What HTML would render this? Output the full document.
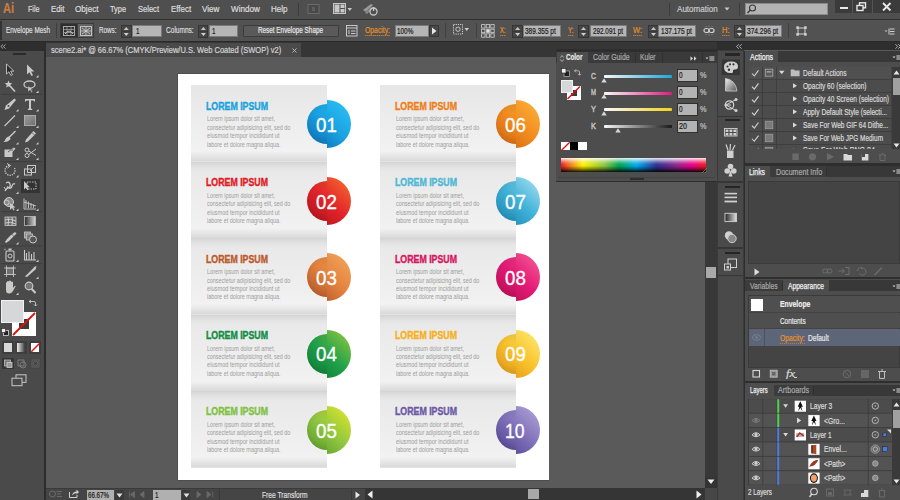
<!DOCTYPE html>
<html><head><meta charset="utf-8">
<style>
*{margin:0;padding:0;box-sizing:border-box}
html,body{width:900px;height:500px;overflow:hidden;background:#5a5a5a;font-family:"Liberation Sans",sans-serif;position:relative}
.a{position:absolute}
.t{position:absolute;white-space:nowrap;line-height:1;transform-origin:0 0;-webkit-text-stroke-width:0.22px}
.nb{-webkit-text-stroke-width:0}
svg{position:absolute;overflow:visible}

</style></head><body>
<div class="a" style="left:0px;top:0px;width:900px;height:19px;background:#4f4f4f;"></div>
<div class="a" style="left:0px;top:18.5px;width:900px;height:1.5px;background:#2f2f2f;"></div>
<div class="t " id="t0" style="left:2.60px;top:1.35px;font-size:14px;color:#c97d3e;font-weight:bold;transform:scaleX(0.7857);">Ai</div>
<div class="t " id="t1" style="left:27.50px;top:4.68px;font-size:9px;color:#dcdcdc;transform:scaleX(0.7922);">File</div>
<div class="t " id="t2" style="left:50.50px;top:4.68px;font-size:9px;color:#dcdcdc;transform:scaleX(0.8701);">Edit</div>
<div class="t " id="t3" style="left:75.00px;top:4.68px;font-size:9px;color:#dcdcdc;transform:scaleX(0.9033);">Object</div>
<div class="t " id="t4" style="left:110.00px;top:4.68px;font-size:9px;color:#dcdcdc;transform:scaleX(0.8199);">Type</div>
<div class="t " id="t5" style="left:138.00px;top:4.68px;font-size:9px;color:#dcdcdc;transform:scaleX(0.8395);">Select</div>
<div class="t " id="t6" style="left:170.60px;top:4.68px;font-size:9px;color:#dcdcdc;transform:scaleX(0.8837);">Effect</div>
<div class="t " id="t7" style="left:201.70px;top:4.68px;font-size:9px;color:#dcdcdc;transform:scaleX(0.9040);">View</div>
<div class="t " id="t8" style="left:231.10px;top:4.68px;font-size:9px;color:#dcdcdc;transform:scaleX(0.9027);">Window</div>
<div class="t " id="t9" style="left:271.40px;top:4.68px;font-size:9px;color:#dcdcdc;transform:scaleX(0.8857);">Help</div>
<div class="a" style="left:297.5px;top:3px;width:1px;height:13px;background:#3c3c3c;"></div>
<svg style="left:307px;top:3px" width="14" height="12" viewBox="0 0 14 12"><rect x="1" y="1.5" width="11" height="9" fill="#494949" stroke="#6a6a6a" stroke-width="1"/><rect x="5" y="4" width="3" height="4" fill="#5e5e5e"/></svg>
<svg style="left:333px;top:3px" width="20" height="12" viewBox="0 0 20 12"><rect x="0.5" y="0.5" width="12" height="10" fill="none" stroke="#c8c8c8" stroke-width="1"/><rect x="1.5" y="1.5" width="5" height="8" fill="#c8c8c8"/><rect x="7.5" y="1.5" width="4" height="3.5" fill="#c8c8c8"/><rect x="7.5" y="6" width="4" height="3.5" fill="#c8c8c8"/><path d="M14.5 5 L19 5 L16.75 8 Z" fill="#c8c8c8"/></svg>
<svg style="left:362px;top:3px" width="16" height="13" viewBox="0 0 16 13"><path d="M1 7 L9 1 L11 2 L4 9 Z" fill="#9a9a9a"/><path d="M3 10 L10 4 L11 5 L5 11Z" fill="#8a8a8a"/><circle cx="11.5" cy="8.5" r="3.5" fill="none" stroke="#c8c8c8" stroke-width="1.3"/><rect x="10.9" y="4" width="1.3" height="4" fill="#c8c8c8"/></svg>
<div class="a" style="left:669px;top:3px;width:1px;height:13px;background:#3c3c3c;"></div>
<div class="t " id="t10" style="left:677.30px;top:4.58px;font-size:9px;color:#c8c8c8;transform:scaleX(0.8961);">Automation</div>
<svg style="left:724px;top:7px" width="6" height="4" viewBox="0 0 6 4"><path d="M0.5 0.5 L5.5 0.5 L3 3.5 Z" fill="#c8c8c8"/></svg>
<div class="a" style="left:738.5px;top:3px;width:1px;height:13px;background:#3c3c3c;"></div>
<div class="a" style="left:744.8px;top:3.2px;width:83.7px;height:11.5px;background:#b3b3b3;border:1px solid #8a8a8a;"></div>
<svg style="left:746px;top:4px" width="11" height="10" viewBox="0 0 11 10"><circle cx="6.5" cy="4" r="3" fill="none" stroke="#3a3a3a" stroke-width="1.1"/><path d="M4.3 6 L1.5 9" stroke="#3a3a3a" stroke-width="1.4"/></svg>
<div class="a" style="left:834.5px;top:0px;width:65.5px;height:12.5px;background:#3b3b3b;"></div>
<div class="a" style="left:852px;top:0px;width:1px;height:12.5px;background:#555555;"></div>
<div class="a" style="left:872px;top:0px;width:1px;height:12.5px;background:#555555;"></div>
<div class="a" style="left:840px;top:7.2px;width:8px;height:2.2px;background:#e8e8e8;"></div>
<svg style="left:856px;top:2px" width="12" height="10" viewBox="0 0 12 10"><rect x="3.5" y="0.8" width="6" height="5" fill="none" stroke="#e8e8e8" stroke-width="1.4"/><rect x="1" y="3.5" width="6" height="5" fill="#3b3b3b" stroke="#e8e8e8" stroke-width="1.4"/></svg>
<svg style="left:882px;top:2px" width="10" height="10" viewBox="0 0 10 10"><path d="M1 1 L8.5 8.5 M8.5 1 L1 8.5" stroke="#e8e8e8" stroke-width="1.8"/></svg>
<div class="a" style="left:0px;top:20px;width:900px;height:21.3px;background:#525252;"></div>
<div class="a" style="left:0px;top:41.3px;width:900px;height:1px;background:#2a2a2a;"></div>
<div class="a" style="left:0px;top:21px;width:2px;height:19px;background:#333333;"></div>
<div class="t " id="t11" style="left:6.00px;top:26.12px;font-size:8.6px;color:#dedede;transform:scaleX(0.7426);">Envelope Mesh</div>
<div class="a" style="left:55.5px;top:23px;width:1px;height:15px;background:#3f3f3f;"></div>
<div class="a" style="left:60px;top:23.3px;width:34px;height:15px;background:#3a3a3a;"></div>
<div class="a" style="left:61px;top:24.3px;width:16px;height:13px;background:#2f2f2f;"></div>
<div class="a" style="left:78px;top:24.3px;width:15px;height:13px;background:#626262;"></div>
<svg style="left:63px;top:26px" width="12" height="10" viewBox="0 0 12 10"><rect x="0.5" y="0.5" width="11" height="9" fill="none" stroke="#a8a8a8" stroke-width="1"/><path d="M0.5 3.5 H11.5 M0.5 6.5 H11.5 M4 0.5 V9.5 M8 0.5 V9.5" stroke="#a0a0a0" stroke-width="0.8"/><path d="M2 8 Q6 2 10 8" stroke="#c8c8c8" fill="none" stroke-width="0.9"/></svg>
<svg style="left:80px;top:26px" width="12" height="10" viewBox="0 0 12 10"><rect x="0.5" y="0.5" width="11" height="9" fill="none" stroke="#c0c0c0" stroke-width="1"/><path d="M6 0.5 V9.5 M0.5 5 H11.5" stroke="#c0c0c0" stroke-width="0.9"/><path d="M2 2 L10 8 M10 2 L2 8" stroke="#d0d0d0" stroke-width="0.9"/></svg>
<div class="t " id="t12" style="left:99.00px;top:25.98px;font-size:9px;color:#dadada;transform:scaleX(0.6996);">Rows:</div>
<div class="a" style="left:121px;top:24.5px;width:10.5px;height:13px;background:#464646;border:1px solid #363636;"></div>
<div class="a" style="left:122px;top:30.5px;width:8.5px;height:1px;background:#3a3a3a;"></div>
<svg style="left:121px;top:24.5px" width="10.5" height="13" viewBox="0 0 10.5 13"><path d="M2.75 4.9 L7.75 4.9 L5.25 2.0999999999999996 Z" fill="#c4c4c4"/><path d="M2.75 8.1 L7.75 8.1 L5.25 10.9 Z" fill="#cfcfcf"/></svg>
<div class="a" style="left:131.5px;top:24.7px;width:30px;height:12.5px;background:#b5b5b5;border:1px solid #7a7a7a;"></div>
<div class="t " id="t13" style="left:135.50px;top:26.88px;font-size:9px;color:#1e1e1e;transform:scaleX(0.6978);">1</div>
<div class="t " id="t14" style="left:166.00px;top:25.98px;font-size:9px;color:#dadada;transform:scaleX(0.7286);">Columns:</div>
<div class="a" style="left:197.5px;top:24.5px;width:10.8px;height:13px;background:#464646;border:1px solid #363636;"></div>
<div class="a" style="left:198.5px;top:30.5px;width:8.8px;height:1px;background:#3a3a3a;"></div>
<svg style="left:197.5px;top:24.5px" width="10.8" height="13" viewBox="0 0 10.8 13"><path d="M2.9000000000000004 4.9 L7.9 4.9 L5.4 2.0999999999999996 Z" fill="#c4c4c4"/><path d="M2.9000000000000004 8.1 L7.9 8.1 L5.4 10.9 Z" fill="#cfcfcf"/></svg>
<div class="a" style="left:208.5px;top:24.7px;width:29px;height:12.5px;background:#b5b5b5;border:1px solid #7a7a7a;"></div>
<div class="t " id="t15" style="left:211.80px;top:26.88px;font-size:9px;color:#1e1e1e;transform:scaleX(0.6978);">1</div>
<div class="a" style="left:243.3px;top:24.7px;width:96px;height:12.5px;background:#5a5a5a;border:1px solid #3c3c3c;border-radius:1px;"></div>
<div class="t " id="t16" style="left:258.00px;top:26.08px;font-size:9px;color:#e6e6e6;transform:scaleX(0.7059);">Reset Envelope Shape</div>
<svg style="left:346px;top:25px" width="12" height="12" viewBox="0 0 12 12"><rect x="0.5" y="0.5" width="10.5" height="10.5" fill="none" stroke="#c8c8c8" stroke-width="1"/><path d="M0.5 3 H11 M3 5 V9 M5 6 H9.5 M5 8.5 H9.5" stroke="#c8c8c8" stroke-width="1"/></svg>
<div class="t " id="t17" style="left:365.00px;top:25.98px;font-size:9px;color:#e0902c;transform:scaleX(0.7572);">Opacity:</div>
<svg style="left:365px;top:35px" width="26" height="2"><path d="M0 0.5 H25" stroke="#c07a28" stroke-width="1" stroke-dasharray="1.5 0.5"/></svg>
<div class="a" style="left:395px;top:24.7px;width:34.2px;height:12.5px;background:#b5b5b5;border:1px solid #7a7a7a;"></div>
<div class="t " id="t18" style="left:397.00px;top:26.88px;font-size:9px;color:#1e1e1e;transform:scaleX(0.7077);">100%</div>
<div class="a" style="left:429.2px;top:24.7px;width:10px;height:12.5px;background:#474747;border:1px solid #363636;"></div>
<svg style="left:431px;top:27px" width="6" height="8"><path d="M1 0.5 L5.5 4 L1 7.5Z" fill="#e6e6e6"/></svg>
<div class="a" style="left:445px;top:23px;width:1px;height:15px;background:#3f3f3f;"></div>
<svg style="left:453px;top:24px" width="18" height="12" viewBox="0 0 18 12"><rect x="0.5" y="0.5" width="9" height="9.5" fill="none" stroke="#cfcfcf" stroke-width="1" stroke-dasharray="1.2 1"/><circle cx="5" cy="5.2" r="2.2" fill="none" stroke="#cfcfcf" stroke-width="0.9"/><path d="M11.5 4 L16 4 L13.75 7 Z" fill="#cfcfcf"/></svg>
<div class="a" style="left:475.8px;top:23px;width:1px;height:15px;background:#3f3f3f;"></div>
<svg style="left:480.5px;top:23.5px" width="14" height="14" viewBox="0 0 14 14"><rect x="0.6" y="0.6" width="3.4" height="3.4" fill="none" stroke="#cfcfcf" stroke-width="0.8"/><rect x="5.199999999999999" y="0.6" width="3.4" height="3.4" fill="none" stroke="#cfcfcf" stroke-width="0.8"/><rect x="9.799999999999999" y="0.6" width="3.4" height="3.4" fill="none" stroke="#cfcfcf" stroke-width="0.8"/><rect x="0.6" y="5.199999999999999" width="3.4" height="3.4" fill="none" stroke="#cfcfcf" stroke-width="0.8"/><rect x="5.199999999999999" y="5.199999999999999" width="3.6" height="3.6" fill="#dcdcdc"/><rect x="9.799999999999999" y="5.199999999999999" width="3.4" height="3.4" fill="none" stroke="#cfcfcf" stroke-width="0.8"/><rect x="0.6" y="9.799999999999999" width="3.4" height="3.4" fill="none" stroke="#cfcfcf" stroke-width="0.8"/><rect x="5.199999999999999" y="9.799999999999999" width="3.4" height="3.4" fill="none" stroke="#cfcfcf" stroke-width="0.8"/><rect x="9.799999999999999" y="9.799999999999999" width="3.4" height="3.4" fill="none" stroke="#cfcfcf" stroke-width="0.8"/></svg>
<div class="t " id="t19" style="left:500.30px;top:25.98px;font-size:9px;color:#e0902c;transform:scaleX(0.6459);">X:</div>
<svg style="left:500px;top:35px" width="7" height="2"><path d="M0 0.5 H6" stroke="#c07a28" stroke-width="1" stroke-dasharray="1.5 0.5"/></svg>
<div class="a" style="left:512px;top:24.5px;width:11.3px;height:13px;background:#464646;border:1px solid #363636;"></div>
<div class="a" style="left:513px;top:30.5px;width:9.3px;height:1px;background:#3a3a3a;"></div>
<svg style="left:512px;top:24.5px" width="11.3" height="13" viewBox="0 0 11.3 13"><path d="M3.1500000000000004 4.9 L8.15 4.9 L5.65 2.0999999999999996 Z" fill="#c4c4c4"/><path d="M3.1500000000000004 8.1 L8.15 8.1 L5.65 10.9 Z" fill="#cfcfcf"/></svg>
<div class="a" style="left:523.3px;top:24.7px;width:37.5px;height:12.5px;background:#b5b5b5;border:1px solid #7a7a7a;"></div>
<div class="t " id="t20" style="left:525.00px;top:26.88px;font-size:9px;color:#1e1e1e;transform:scaleX(0.7239);">389.355 pt</div>
<div class="t " id="t21" style="left:567.50px;top:25.98px;font-size:9px;color:#e0902c;transform:scaleX(0.6862);">Y:</div>
<svg style="left:567.5px;top:35px" width="7" height="2"><path d="M0 0.5 H6" stroke="#c07a28" stroke-width="1" stroke-dasharray="1.5 0.5"/></svg>
<div class="a" style="left:578.3px;top:24.5px;width:11px;height:13px;background:#464646;border:1px solid #363636;"></div>
<div class="a" style="left:579.3px;top:30.5px;width:9px;height:1px;background:#3a3a3a;"></div>
<svg style="left:578.3px;top:24.5px" width="11" height="13" viewBox="0 0 11 13"><path d="M3.0 4.9 L8.0 4.9 L5.5 2.0999999999999996 Z" fill="#c4c4c4"/><path d="M3.0 8.1 L8.0 8.1 L5.5 10.9 Z" fill="#cfcfcf"/></svg>
<div class="a" style="left:589.5px;top:24.7px;width:37.2px;height:12.5px;background:#b5b5b5;border:1px solid #7a7a7a;"></div>
<div class="t " id="t22" style="left:592.50px;top:26.88px;font-size:9px;color:#1e1e1e;transform:scaleX(0.7051);">292.091 pt</div>
<div class="t " id="t23" style="left:633.30px;top:25.98px;font-size:9px;color:#e0902c;transform:scaleX(0.8300);">W:</div>
<svg style="left:633px;top:35px" width="10" height="2"><path d="M0 0.5 H9" stroke="#c07a28" stroke-width="1" stroke-dasharray="1.5 0.5"/></svg>
<div class="a" style="left:647.5px;top:24.5px;width:11px;height:13px;background:#464646;border:1px solid #363636;"></div>
<div class="a" style="left:648.5px;top:30.5px;width:9px;height:1px;background:#3a3a3a;"></div>
<svg style="left:647.5px;top:24.5px" width="11" height="13" viewBox="0 0 11 13"><path d="M3.0 4.9 L8.0 4.9 L5.5 2.0999999999999996 Z" fill="#c4c4c4"/><path d="M3.0 8.1 L8.0 8.1 L5.5 10.9 Z" fill="#cfcfcf"/></svg>
<div class="a" style="left:658.3px;top:24.7px;width:37.5px;height:12.5px;background:#b5b5b5;border:1px solid #7a7a7a;"></div>
<div class="t " id="t24" style="left:660.80px;top:26.88px;font-size:9px;color:#1e1e1e;transform:scaleX(0.7263);">137.175 pt</div>
<svg style="left:703px;top:25px" width="12" height="12" viewBox="0 0 12 12"><rect x="1" y="3.5" width="5" height="4" rx="2" fill="none" stroke="#d0d0d0" stroke-width="1.2"/><rect x="6" y="3.5" width="5" height="4" rx="2" fill="none" stroke="#d0d0d0" stroke-width="1.2"/><path d="M3 1 V2 M6 0.5 V2 M9 1 V2 M3 9 V10 M6 9 V10.5 M9 9 V10" stroke="#9a9a9a" stroke-width="0.8"/></svg>
<div class="t " id="t25" style="left:721.70px;top:25.98px;font-size:9px;color:#e0902c;transform:scaleX(0.8333);">H:</div>
<svg style="left:721.5px;top:35px" width="9" height="2"><path d="M0 0.5 H8" stroke="#c07a28" stroke-width="1" stroke-dasharray="1.5 0.5"/></svg>
<div class="a" style="left:733.8px;top:24.5px;width:11px;height:13px;background:#464646;border:1px solid #363636;"></div>
<div class="a" style="left:734.8px;top:30.5px;width:9px;height:1px;background:#3a3a3a;"></div>
<svg style="left:733.8px;top:24.5px" width="11" height="13" viewBox="0 0 11 13"><path d="M3.0 4.9 L8.0 4.9 L5.5 2.0999999999999996 Z" fill="#c4c4c4"/><path d="M3.0 8.1 L8.0 8.1 L5.5 10.9 Z" fill="#cfcfcf"/></svg>
<div class="a" style="left:744.7px;top:24.7px;width:37.8px;height:12.5px;background:#b5b5b5;border:1px solid #7a7a7a;"></div>
<div class="t " id="t26" style="left:747.00px;top:26.88px;font-size:9px;color:#1e1e1e;transform:scaleX(0.7333);">374.296 pt</div>
<div class="a" style="left:787.7px;top:23px;width:1px;height:15px;background:#3f3f3f;"></div>
<svg style="left:795.5px;top:26px" width="11" height="10" viewBox="0 0 11 10"><rect x="2" y="2" width="7" height="6" fill="none" stroke="#d0d0d0" stroke-width="1"/><rect x="0.3" y="0.3" width="2.6" height="2.6" fill="#d0d0d0"/><rect x="8.1" y="0.3" width="2.6" height="2.6" fill="#d0d0d0"/><rect x="0.3" y="7.1" width="2.6" height="2.6" fill="#d0d0d0"/><rect x="8.1" y="7.1" width="2.6" height="2.6" fill="#d0d0d0"/></svg>
<svg style="left:884px;top:28px" width="11" height="7" viewBox="0 0 11 7"><path d="M0.5 2.5 L3.5 2.5 L2 4 Z" fill="#d0d0d0"/><path d="M5 0.5 V6.5 M6 1 H10.5 M6 3.5 H10.5 M6 6 H10.5" stroke="#d0d0d0" stroke-width="1"/></svg>
<div class="a" style="left:0px;top:42.3px;width:43.5px;height:457.7px;background:#4a4a4a;"></div>
<div class="a" style="left:0px;top:42.3px;width:43.5px;height:8.5px;background:#2e2e2e;"></div>
<svg style="left:0px;top:43px" width="6" height="7" viewBox="0 0 6 7"><path d="M3 1.5 L0.8 3.5 L3 5.5 M5.5 1.5 L3.3 3.5 L5.5 5.5" stroke="#b0b0b0" stroke-width="0.9" fill="none"/></svg>
<div class="a" style="left:43.5px;top:42.3px;width:2px;height:457.7px;background:#2c2c2c;"></div>
<div class="a" style="left:13px;top:53px;width:13px;height:2.4px;background:#2a2a2a;"></div>
<svg style="left:0px;top:0px" width="43" height="400" viewBox="0 0 43 400"><rect x="1" y="93.8" width="41" height="1" fill="#3e3e3e"/><rect x="1" y="161.2" width="41" height="1" fill="#3e3e3e"/><rect x="1" y="211.1" width="41" height="1" fill="#3e3e3e"/><rect x="1" y="245.5" width="41" height="1" fill="#3e3e3e"/><rect x="1" y="263.1" width="41" height="1" fill="#3e3e3e"/><path d="M6.5 64 L6.5 74 L8.9 71.8 L10.9 75.5 L12.5 74.7 L10.6 71.1 L13.8 71.1 Z" fill="#2a2a2a" stroke="#c9c9c9" stroke-width="0.9"/><path d="M27 64.5 L27 74.5 L29.4 72.3 L31.4 76 L33 75.2 L31.1 71.6 L34.3 71.6 Z" fill="#c9c9c9"/><path d="M38.5 77.5 L38.5 75.0 L36.0 77.5 Z" fill="#d0d0d0"/><path d="M8.5 80.5 L9.6 83 L12.3 83.2 L10.2 85 L10.9 87.6 L8.5 86.2 L6.1 87.6 L6.8 85 L4.7 83.2 L7.4 83 Z" fill="#c9c9c9"/><path d="M10 86 L15 91.5" stroke="#c9c9c9" stroke-width="1.6"/><ellipse cx="29.5" cy="84.5" rx="5.5" ry="3.5" fill="none" stroke="#c9c9c9" stroke-width="1.3"/><path d="M28 86 L28 92 L30 90 L31.5 92.5 L32.5 92 L31.2 89.5 L33.5 89.5 Z" fill="#c9c9c9" stroke="#4a4a4a" stroke-width="0.4"/><path d="M38.5 93 L38.5 90.5 L36.0 93 Z" fill="#d0d0d0"/><path d="M14.5 98.5 L6 105.5 L4.5 110 L9 108.5 L16 100 Z" fill="#c9c9c9"/><circle cx="8.5" cy="106" r="1" fill="#4a4a4a"/><path d="M18.5 111.5 L18.5 109.0 L16.0 111.5 Z" fill="#d0d0d0"/><path d="M25 99 H35 V101.5 H34 L33.5 100.5 H31 V108.5 L32.2 109 V110 H27.8 V109 L29 108.5 V100.5 H26.5 L26 101.5 H25 Z" fill="#c9c9c9"/><path d="M38.5 111.5 L38.5 109.0 L36.0 111.5 Z" fill="#d0d0d0"/><path d="M4.5 126 L15 115.5" stroke="#c9c9c9" stroke-width="1.1"/><path d="M18.5 128 L18.5 125.5 L16.0 128 Z" fill="#d0d0d0"/><defs><linearGradient id="rg" x1="0" y1="0" x2="1" y2="1"><stop offset="0" stop-color="#9a9a9a"/><stop offset="1" stop-color="#707070"/></linearGradient><linearGradient id="gg" x1="0" y1="0" x2="1" y2="0"><stop offset="0" stop-color="#2a2a2a"/><stop offset="1" stop-color="#d8d8d8"/></linearGradient></defs><rect x="24.5" y="115.5" width="11" height="10" fill="url(#rg)" stroke="#b8b8b8" stroke-width="0.8"/><path d="M38.5 128 L38.5 125.5 L36.0 128 Z" fill="#d0d0d0"/><path d="M15.5 131 L9 137.5" stroke="#c9c9c9" stroke-width="1.4"/><path d="M9.5 136.5 Q7 136 5.5 139 Q5 141 3.5 142 Q8 142.5 10.5 139 Z" fill="#c9c9c9"/><path d="M18.5 144.5 L18.5 142.0 L16.0 144.5 Z" fill="#d0d0d0"/><path d="M33.5 131 L36 133.5 L28 141.5 L25 142.5 L26 139.5 Z" fill="#c9c9c9"/><path d="M32 132.5 L34.5 135" stroke="#4a4a4a" stroke-width="0.7"/><path d="M38.5 144.5 L38.5 142.0 L36.0 144.5 Z" fill="#d0d0d0"/><path d="M4.5 149.5 H11 L14 147.5 L15.5 148.5 L12.5 152 V157 H4.5 Z" fill="#c9c9c9"/><path d="M8 152 Q11 149 13 150" stroke="#4a4a4a" stroke-width="0.8" fill="none"/><path d="M18.5 160 L18.5 157.5 L16.0 160 Z" fill="#d0d0d0"/><circle cx="27" cy="150" r="2" fill="none" stroke="#c9c9c9" stroke-width="1"/><circle cx="27" cy="155.5" r="2" fill="none" stroke="#c9c9c9" stroke-width="1"/><path d="M28.7 151 L36 155.5 M28.7 154.5 L36 149" stroke="#c9c9c9" stroke-width="1"/><path d="M38.5 160 L38.5 157.5 L36.0 160 Z" fill="#d0d0d0"/><path d="M14.5 168 A5 5 0 1 1 10 165.3" fill="none" stroke="#c9c9c9" stroke-width="1.3" stroke-dasharray="1.3 1"/><path d="M7 163.5 L10.5 165.5 L7.5 168" fill="none" stroke="#c9c9c9" stroke-width="1"/><path d="M18.5 177.5 L18.5 175.0 L16.0 177.5 Z" fill="#d0d0d0"/><rect x="24.5" y="169" width="7" height="6" fill="none" stroke="#c9c9c9" stroke-width="1"/><rect x="27.5" y="165.5" width="8" height="7" fill="none" stroke="#c9c9c9" stroke-width="1"/><path d="M30 171 L34 167" stroke="#c9c9c9" stroke-width="1"/><path d="M5 191 Q7 187 9 188 Q11 189 12 186 Q13 183 15 184 M6 183 Q9 181 10 184 Q11 187 8 188" fill="none" stroke="#c9c9c9" stroke-width="1.3"/><path d="M4 187 L6 190 L8 186" fill="none" stroke="#c9c9c9" stroke-width="1"/><path d="M18.5 194 L18.5 191.5 L16.0 194 Z" fill="#d0d0d0"/><rect x="21" y="179" width="18.7" height="14" fill="#333333"/><rect x="27" y="182" width="9" height="7" fill="none" stroke="#c9c9c9" stroke-width="0.9" stroke-dasharray="1.5 1"/><path d="M24 181 L24 189.5 L26 187.8 L27.3 190.3 L28.5 189.8 L27.3 187.3 L29.8 187.3 Z" fill="#c9c9c9"/><circle cx="9" cy="202" r="4.5" fill="#8a8a8a" stroke="#c9c9c9" stroke-width="1"/><circle cx="6.5" cy="202.5" r="2.5" fill="none" stroke="#d8d8d8" stroke-width="0.8"/><path d="M10 203 L10 210 L12 208 L13.5 210.5 L14.5 210 L13.3 207.5 L15.5 207.5 Z" fill="#c9c9c9"/><path d="M18.5 211 L18.5 208.5 L16.0 211 Z" fill="#d0d0d0"/><path d="M24 198.5 V209 H36 M26 200 V208 M28.5 201.5 V208 M31 203 V208 M33.5 204.5 V208 M24 202 L36 206" stroke="#c9c9c9" stroke-width="0.9" fill="none"/><path d="M38.5 211 L38.5 208.5 L36.0 211 Z" fill="#d0d0d0"/><rect x="5" y="217" width="11" height="8.5" fill="#6a6a6a" stroke="#c9c9c9" stroke-width="0.8"/><path d="M5 220 Q10 218 16 221 M5 223 Q10 221 16 224 M8 217 Q9 221 8 225.5 M12 217 Q13 221 12 225.5" stroke="#dedede" stroke-width="0.8" fill="none"/><rect x="24.5" y="216.5" width="11" height="9" fill="url(#gg)" stroke="#bdbdbd" stroke-width="0.8"/><path d="M15 232 L16.5 233.5 L13 237 L9 241 L6 243 L5 242 L7 239 L11 235 Z" fill="#c9c9c9"/><path d="M11.5 234 L14 236.5" stroke="#4a4a4a" stroke-width="0.7"/><path d="M18.5 244.5 L18.5 242.0 L16.0 244.5 Z" fill="#d0d0d0"/><rect x="24.5" y="232" width="6" height="6" fill="#8a8a8a" stroke="#c9c9c9" stroke-width="0.8"/><rect x="26.5" y="234" width="6" height="6" fill="#7a7a7a" stroke="#c9c9c9" stroke-width="0.8"/><circle cx="33" cy="239.5" r="3.5" fill="#555" stroke="#c9c9c9" stroke-width="1"/><rect x="6" y="251" width="8" height="10" rx="1" fill="none" stroke="#c9c9c9" stroke-width="1.1"/><circle cx="10" cy="256" r="2" fill="none" stroke="#c9c9c9" stroke-width="1"/><rect x="8.5" y="248.5" width="3" height="2" fill="#c9c9c9"/><circle cx="5" cy="249.5" r="1" fill="#888"/><path d="M18.5 262 L18.5 259.5 L16.0 262 Z" fill="#d0d0d0"/><path d="M24.5 250 V260 H36 M26.5 260 V253 M29 260 V251.5 M31.5 260 V254 M34 260 V252" stroke="#c9c9c9" stroke-width="1.1" fill="none"/><path d="M38.5 262 L38.5 259.5 L36.0 262 Z" fill="#d0d0d0"/><rect x="6.5" y="268" width="7" height="6.5" fill="#6f6f6f" stroke="#c9c9c9" stroke-width="0.8"/><path d="M6.5 265.5 V277 M13.5 265.5 V277 M4 268 H16 M4 274.5 H16" stroke="#c9c9c9" stroke-width="0.8"/><path d="M35.5 266 L25 276.5 L27 277 L36 269 Z" fill="#c9c9c9"/><path d="M34 267.5 L36.5 267" stroke="#c9c9c9" stroke-width="1"/><path d="M38.5 279 L38.5 276.5 L36.0 279 Z" fill="#d0d0d0"/><path d="M6 286 V283 Q6 282 7 282.5 V287 V281.5 Q8 280.5 9 281.5 V286 V281 Q10 280 11 281 V286 V282 Q12 281 13 282 V288 L14.5 286 Q15.5 285.5 15.5 286.5 L13 291 Q11.5 293.5 9 293.5 Q6 293.5 6 290 Z" fill="#c9c9c9"/><path d="M18.5 295 L18.5 292.5 L16.0 295 Z" fill="#d0d0d0"/><circle cx="29" cy="286" r="3.8" fill="#777" stroke="#c9c9c9" stroke-width="1.2"/><path d="M31.5 288.8 L35.5 293" stroke="#c9c9c9" stroke-width="2"/></svg>
<div class="a" style="left:12px;top:312px;width:24px;height:24px;background:#ffffff;"></div>
<div class="a" style="left:19px;top:319px;width:10px;height:10px;background:#3b3b3b;"></div>
<svg style="left:12px;top:312px" width="24" height="24"><path d="M1 23 L23 1" stroke="#e01010" stroke-width="1.8"/></svg>
<div class="a" style="left:1px;top:300px;width:22.5px;height:23.2px;background:#d6d7d9;border:1px solid #f2f2f2;"></div>
<svg style="left:28px;top:300px" width="9" height="7" viewBox="0 0 9 7"><path d="M1 1.5 L3 0 M1 1.5 L3 3 M1 1.5 H6 Q7.5 1.5 7.5 3 V6 M6 4.5 L7.5 6 L9 4.5" stroke="#c8c8c8" stroke-width="0.9" fill="none"/></svg>
<svg style="left:1px;top:328px" width="8" height="8" viewBox="0 0 8 8"><rect x="2.5" y="2.5" width="5" height="5" fill="#222" stroke="#ddd" stroke-width="0.8"/><rect x="0.5" y="0.5" width="4" height="4" fill="#eee" stroke="#222" stroke-width="0.6"/></svg>
<div class="a" style="left:2px;top:341px;width:12px;height:13px;background:#3e3e3e;"></div>
<div class="a" style="left:3.5px;top:343px;width:8.5px;height:9px;background:#d8d8d8;"></div>
<div class="a" style="left:15px;top:341px;width:12px;height:13px;background:#3e3e3e;"></div>
<div class="a" style="left:16.5px;top:343px;width:8.5px;height:9px;background:linear-gradient(to right,#f0f0f0,#3a3a3a);"></div>
<div class="a" style="left:29px;top:341px;width:12px;height:13px;background:#3e3e3e;"></div>
<div class="a" style="left:30.5px;top:343px;width:8.5px;height:9px;background:#ffffff;"></div>
<svg style="left:30.5px;top:343px" width="9" height="9"><path d="M0.3 8.7 L8.7 0.3" stroke="#e01010" stroke-width="1.5"/></svg>
<div class="a" style="left:2px;top:358px;width:12px;height:11px;background:#353535;"></div>
<div class="a" style="left:15px;top:358px;width:12px;height:11px;background:#474747;"></div>
<div class="a" style="left:28px;top:358px;width:13px;height:11px;background:#474747;"></div>
<svg style="left:3px;top:359px" width="38" height="10" viewBox="0 0 38 10"><rect x="1.5" y="1" width="6" height="6" fill="#777" stroke="#bdbdbd" stroke-width="0.8"/><rect x="4" y="3.5" width="5" height="5" fill="#999" stroke="#d0d0d0" stroke-width="0.8"/><rect x="15" y="1" width="6" height="6" fill="none" stroke="#8a8a8a" stroke-width="0.8"/><circle cx="20" cy="6" r="3" fill="none" stroke="#8a8a8a" stroke-width="0.8"/><rect x="29" y="1" width="7" height="7" fill="none" stroke="#666" stroke-width="0.8"/><circle cx="32.5" cy="4.5" r="2.3" fill="none" stroke="#666" stroke-width="0.8"/></svg>
<svg style="left:11px;top:374px" width="16" height="13" viewBox="0 0 16 13"><rect x="5" y="0.8" width="10" height="7.5" fill="#4a4a4a" stroke="#c8c8c8" stroke-width="1"/><rect x="1" y="4.2" width="10" height="7.5" fill="#4a4a4a" stroke="#c8c8c8" stroke-width="1"/></svg>
<div class="a" style="left:45.5px;top:42.3px;width:672px;height:14.8px;background:#363636;"></div>
<div class="a" style="left:45.5px;top:42.5px;width:255.6px;height:14.5px;background:#4a4a4a;"></div>
<div class="t " id="t27" style="left:51.00px;top:45.92px;font-size:8.6px;color:#d2d2d2;transform:scaleX(0.8733);">scene2.ai* @ 66.67% (CMYK/Preview/U.S. Web Coated (SWOP) v2)</div>
<svg style="left:292px;top:48px" width="5" height="5" viewBox="0 0 5 5"><path d="M0.5 0.5 L4.5 4.5 M4.5 0.5 L0.5 4.5" stroke="#c0c0c0" stroke-width="0.9"/></svg>
<div class="a" style="left:45.5px;top:57px;width:659.5px;height:431px;background:#5a5a5a;"></div>
<div class="a" style="left:177px;top:73px;width:372.1px;height:407.5px;background:#4e4e4e;"></div>
<div class="a" style="left:177.5px;top:73.5px;width:371.1px;height:406.5px;background:#ffffff;"></div>
<div class="a" style="left:191.0px;top:85.2px;width:136.3px;height:76.74px;background:linear-gradient(to bottom,#e5e6e7 0px,#e8e8e9 10px,#ececec 30px,#f0f0f0 58px,#f2f2f2 66px,#e6e6e6 71px,#dadada 75.6px,#e3e3e3 76.44px);"></div>
<div class="t " id="t28" style="left:206.30px;top:100.63px;font-size:10.6px;color:#1aa3e0;font-weight:bold;transform:scaleX(0.8294);-webkit-text-stroke:0.4px #1aa3e0;">LOREM IPSUM</div>
<div class="t nb" id="t29" style="left:207.00px;top:115.31px;font-size:7.2px;color:#9c9c9c;transform:scaleX(0.7667);">Lorem ipsum dolor sit amet,</div>
<div class="t nb" id="t30" style="left:207.00px;top:123.71px;font-size:7.2px;color:#9c9c9c;transform:scaleX(0.7618);">consectetur adipisicing elit, sed do</div>
<div class="t nb" id="t31" style="left:207.00px;top:132.11px;font-size:7.2px;color:#9c9c9c;transform:scaleX(0.7901);">eiusmod tempor incididunt ut</div>
<div class="t nb" id="t32" style="left:207.00px;top:140.51px;font-size:7.2px;color:#9c9c9c;transform:scaleX(0.7579);">labore et dolore magna aliqua.</div>
<svg style="left:297.30px;top:94.40px" width="60" height="60" viewBox="0 0 60 60"><defs><linearGradient id="g0" gradientUnits="userSpaceOnUse" x1="50" y1="8" x2="12" y2="50"><stop offset="0" stop-color="#2cc0f4"/><stop offset="0.5" stop-color="#1aa2e2"/><stop offset="1" stop-color="#0c6fb4"/></linearGradient><radialGradient id="sh0" gradientUnits="userSpaceOnUse" cx="24" cy="30" r="20"><stop offset="0.55" stop-color="#000" stop-opacity="0"/><stop offset="1" stop-color="#000" stop-opacity="0.08"/></radialGradient></defs><path d="M30 6 A24 24 0 0 1 30 54 Z" fill="url(#g0)"/><path d="M30 10 A20 20 0 0 0 30 50 Z" fill="url(#g0)"/><path d="M30 10 A20 20 0 0 0 30 50 Z" fill="url(#sh0)"/></svg>
<div class="t " id="t33" style="left:316.40px;top:114.12px;font-size:21px;color:#ffffff;transform:scaleX(0.8904);-webkit-text-stroke:0.35px #fff;">01</div>
<div class="a" style="left:191.0px;top:161.64px;width:136.3px;height:76.74px;background:linear-gradient(to bottom,#d3d3d3 0px,#d9d9d9 1.5px,#e4e4e4 6px,#e9e9e9 10px,#ececec 30px,#f0f0f0 58px,#f2f2f2 66px,#e6e6e6 71px,#dadada 75.6px,#e3e3e3 76.44px);"></div>
<div class="t " id="t34" style="left:206.30px;top:177.07px;font-size:10.6px;color:#e01b26;font-weight:bold;transform:scaleX(0.8294);-webkit-text-stroke:0.4px #e01b26;">LOREM IPSUM</div>
<div class="t nb" id="t35" style="left:207.00px;top:191.75px;font-size:7.2px;color:#9c9c9c;transform:scaleX(0.7667);">Lorem ipsum dolor sit amet,</div>
<div class="t nb" id="t36" style="left:207.00px;top:200.15px;font-size:7.2px;color:#9c9c9c;transform:scaleX(0.7618);">consectetur adipisicing elit, sed do</div>
<div class="t nb" id="t37" style="left:207.00px;top:208.55px;font-size:7.2px;color:#9c9c9c;transform:scaleX(0.7901);">eiusmod tempor incididunt ut</div>
<div class="t nb" id="t38" style="left:207.00px;top:216.95px;font-size:7.2px;color:#9c9c9c;transform:scaleX(0.7579);">labore et dolore magna aliqua.</div>
<svg style="left:297.30px;top:170.84px" width="60" height="60" viewBox="0 0 60 60"><defs><linearGradient id="g1" gradientUnits="userSpaceOnUse" x1="50" y1="8" x2="12" y2="50"><stop offset="0" stop-color="#f46a2e"/><stop offset="0.5" stop-color="#e3252a"/><stop offset="1" stop-color="#b0121c"/></linearGradient><radialGradient id="sh1" gradientUnits="userSpaceOnUse" cx="24" cy="30" r="20"><stop offset="0.55" stop-color="#000" stop-opacity="0"/><stop offset="1" stop-color="#000" stop-opacity="0.08"/></radialGradient></defs><path d="M30 6 A24 24 0 0 1 30 54 Z" fill="url(#g1)"/><path d="M30 10 A20 20 0 0 0 30 50 Z" fill="url(#g1)"/><path d="M30 10 A20 20 0 0 0 30 50 Z" fill="url(#sh1)"/></svg>
<div class="t " id="t39" style="left:316.40px;top:190.56px;font-size:21px;color:#ffffff;transform:scaleX(0.8904);-webkit-text-stroke:0.35px #fff;">02</div>
<div class="a" style="left:191.0px;top:238.07999999999998px;width:136.3px;height:76.74px;background:linear-gradient(to bottom,#d3d3d3 0px,#d9d9d9 1.5px,#e4e4e4 6px,#e9e9e9 10px,#ececec 30px,#f0f0f0 58px,#f2f2f2 66px,#e6e6e6 71px,#dadada 75.6px,#e3e3e3 76.44px);"></div>
<div class="t " id="t40" style="left:206.30px;top:253.51px;font-size:10.6px;color:#bd5a2c;font-weight:bold;transform:scaleX(0.8294);-webkit-text-stroke:0.4px #bd5a2c;">LOREM IPSUM</div>
<div class="t nb" id="t41" style="left:207.00px;top:268.19px;font-size:7.2px;color:#9c9c9c;transform:scaleX(0.7667);">Lorem ipsum dolor sit amet,</div>
<div class="t nb" id="t42" style="left:207.00px;top:276.59px;font-size:7.2px;color:#9c9c9c;transform:scaleX(0.7618);">consectetur adipisicing elit, sed do</div>
<div class="t nb" id="t43" style="left:207.00px;top:284.99px;font-size:7.2px;color:#9c9c9c;transform:scaleX(0.7901);">eiusmod tempor incididunt ut</div>
<div class="t nb" id="t44" style="left:207.00px;top:293.39px;font-size:7.2px;color:#9c9c9c;transform:scaleX(0.7579);">labore et dolore magna aliqua.</div>
<svg style="left:297.30px;top:247.28px" width="60" height="60" viewBox="0 0 60 60"><defs><linearGradient id="g2" gradientUnits="userSpaceOnUse" x1="50" y1="8" x2="12" y2="50"><stop offset="0" stop-color="#f2a45c"/><stop offset="0.5" stop-color="#e4823e"/><stop offset="1" stop-color="#b05428"/></linearGradient><radialGradient id="sh2" gradientUnits="userSpaceOnUse" cx="24" cy="30" r="20"><stop offset="0.55" stop-color="#000" stop-opacity="0"/><stop offset="1" stop-color="#000" stop-opacity="0.08"/></radialGradient></defs><path d="M30 6 A24 24 0 0 1 30 54 Z" fill="url(#g2)"/><path d="M30 10 A20 20 0 0 0 30 50 Z" fill="url(#g2)"/><path d="M30 10 A20 20 0 0 0 30 50 Z" fill="url(#sh2)"/></svg>
<div class="t " id="t45" style="left:316.40px;top:267.00px;font-size:21px;color:#ffffff;transform:scaleX(0.8904);-webkit-text-stroke:0.35px #fff;">03</div>
<div class="a" style="left:191.0px;top:314.52px;width:136.3px;height:76.74px;background:linear-gradient(to bottom,#d3d3d3 0px,#d9d9d9 1.5px,#e4e4e4 6px,#e9e9e9 10px,#ececec 30px,#f0f0f0 58px,#f2f2f2 66px,#e6e6e6 71px,#dadada 75.6px,#e3e3e3 76.44px);"></div>
<div class="t " id="t46" style="left:206.30px;top:329.95px;font-size:10.6px;color:#128c45;font-weight:bold;transform:scaleX(0.8294);-webkit-text-stroke:0.4px #128c45;">LOREM IPSUM</div>
<div class="t nb" id="t47" style="left:207.00px;top:344.63px;font-size:7.2px;color:#9c9c9c;transform:scaleX(0.7667);">Lorem ipsum dolor sit amet,</div>
<div class="t nb" id="t48" style="left:207.00px;top:353.03px;font-size:7.2px;color:#9c9c9c;transform:scaleX(0.7618);">consectetur adipisicing elit, sed do</div>
<div class="t nb" id="t49" style="left:207.00px;top:361.43px;font-size:7.2px;color:#9c9c9c;transform:scaleX(0.7901);">eiusmod tempor incididunt ut</div>
<div class="t nb" id="t50" style="left:207.00px;top:369.83px;font-size:7.2px;color:#9c9c9c;transform:scaleX(0.7579);">labore et dolore magna aliqua.</div>
<svg style="left:297.30px;top:323.72px" width="60" height="60" viewBox="0 0 60 60"><defs><linearGradient id="g3" gradientUnits="userSpaceOnUse" x1="50" y1="8" x2="12" y2="50"><stop offset="0" stop-color="#8cc63f"/><stop offset="0.5" stop-color="#22a24a"/><stop offset="1" stop-color="#0d7a36"/></linearGradient><radialGradient id="sh3" gradientUnits="userSpaceOnUse" cx="24" cy="30" r="20"><stop offset="0.55" stop-color="#000" stop-opacity="0"/><stop offset="1" stop-color="#000" stop-opacity="0.08"/></radialGradient></defs><path d="M30 6 A24 24 0 0 1 30 54 Z" fill="url(#g3)"/><path d="M30 10 A20 20 0 0 0 30 50 Z" fill="url(#g3)"/><path d="M30 10 A20 20 0 0 0 30 50 Z" fill="url(#sh3)"/></svg>
<div class="t " id="t51" style="left:316.40px;top:343.44px;font-size:21px;color:#ffffff;transform:scaleX(0.8904);-webkit-text-stroke:0.35px #fff;">04</div>
<div class="a" style="left:191.0px;top:390.96px;width:136.3px;height:76.74px;background:linear-gradient(to bottom,#d3d3d3 0px,#d9d9d9 1.5px,#e4e4e4 6px,#e9e9e9 10px,#ececec 30px,#f0f0f0 58px,#f2f2f2 66px,#e6e6e6 71px,#dadada 75.6px,#e3e3e3 76.44px);"></div>
<div class="t " id="t52" style="left:206.30px;top:406.39px;font-size:10.6px;color:#7fc142;font-weight:bold;transform:scaleX(0.8294);-webkit-text-stroke:0.4px #7fc142;">LOREM IPSUM</div>
<div class="t nb" id="t53" style="left:207.00px;top:421.07px;font-size:7.2px;color:#9c9c9c;transform:scaleX(0.7667);">Lorem ipsum dolor sit amet,</div>
<div class="t nb" id="t54" style="left:207.00px;top:429.47px;font-size:7.2px;color:#9c9c9c;transform:scaleX(0.7618);">consectetur adipisicing elit, sed do</div>
<div class="t nb" id="t55" style="left:207.00px;top:437.87px;font-size:7.2px;color:#9c9c9c;transform:scaleX(0.7901);">eiusmod tempor incididunt ut</div>
<div class="t nb" id="t56" style="left:207.00px;top:446.27px;font-size:7.2px;color:#9c9c9c;transform:scaleX(0.7579);">labore et dolore magna aliqua.</div>
<svg style="left:297.30px;top:400.16px" width="60" height="60" viewBox="0 0 60 60"><defs><linearGradient id="g4" gradientUnits="userSpaceOnUse" x1="50" y1="8" x2="12" y2="50"><stop offset="0" stop-color="#dde42c"/><stop offset="0.5" stop-color="#92c840"/><stop offset="1" stop-color="#5a9a2c"/></linearGradient><radialGradient id="sh4" gradientUnits="userSpaceOnUse" cx="24" cy="30" r="20"><stop offset="0.55" stop-color="#000" stop-opacity="0"/><stop offset="1" stop-color="#000" stop-opacity="0.08"/></radialGradient></defs><path d="M30 6 A24 24 0 0 1 30 54 Z" fill="url(#g4)"/><path d="M30 10 A20 20 0 0 0 30 50 Z" fill="url(#g4)"/><path d="M30 10 A20 20 0 0 0 30 50 Z" fill="url(#sh4)"/></svg>
<div class="t " id="t57" style="left:316.40px;top:419.88px;font-size:21px;color:#ffffff;transform:scaleX(0.8904);-webkit-text-stroke:0.35px #fff;">05</div>
<div class="a" style="left:379.6px;top:85.2px;width:136.3px;height:76.74px;background:linear-gradient(to bottom,#e5e6e7 0px,#e8e8e9 10px,#ececec 30px,#f0f0f0 58px,#f2f2f2 66px,#e6e6e6 71px,#dadada 75.6px,#e3e3e3 76.44px);"></div>
<div class="t " id="t58" style="left:394.90px;top:100.63px;font-size:10.6px;color:#ee7f1a;font-weight:bold;transform:scaleX(0.8294);-webkit-text-stroke:0.4px #ee7f1a;">LOREM IPSUM</div>
<div class="t nb" id="t59" style="left:395.60px;top:115.31px;font-size:7.2px;color:#9c9c9c;transform:scaleX(0.7667);">Lorem ipsum dolor sit amet,</div>
<div class="t nb" id="t60" style="left:395.60px;top:123.71px;font-size:7.2px;color:#9c9c9c;transform:scaleX(0.7618);">consectetur adipisicing elit, sed do</div>
<div class="t nb" id="t61" style="left:395.60px;top:132.11px;font-size:7.2px;color:#9c9c9c;transform:scaleX(0.7901);">eiusmod tempor incididunt ut</div>
<div class="t nb" id="t62" style="left:395.60px;top:140.51px;font-size:7.2px;color:#9c9c9c;transform:scaleX(0.7579);">labore et dolore magna aliqua.</div>
<svg style="left:485.90px;top:94.40px" width="60" height="60" viewBox="0 0 60 60"><defs><linearGradient id="g5" gradientUnits="userSpaceOnUse" x1="50" y1="8" x2="12" y2="50"><stop offset="0" stop-color="#fbb038"/><stop offset="0.5" stop-color="#f28c20"/><stop offset="1" stop-color="#cf6610"/></linearGradient><radialGradient id="sh5" gradientUnits="userSpaceOnUse" cx="24" cy="30" r="20"><stop offset="0.55" stop-color="#000" stop-opacity="0"/><stop offset="1" stop-color="#000" stop-opacity="0.08"/></radialGradient></defs><path d="M30 6 A24 24 0 0 1 30 54 Z" fill="url(#g5)"/><path d="M30 10 A20 20 0 0 0 30 50 Z" fill="url(#g5)"/><path d="M30 10 A20 20 0 0 0 30 50 Z" fill="url(#sh5)"/></svg>
<div class="t " id="t63" style="left:505.00px;top:114.12px;font-size:21px;color:#ffffff;transform:scaleX(0.8904);-webkit-text-stroke:0.35px #fff;">06</div>
<div class="a" style="left:379.6px;top:161.64px;width:136.3px;height:76.74px;background:linear-gradient(to bottom,#d3d3d3 0px,#d9d9d9 1.5px,#e4e4e4 6px,#e9e9e9 10px,#ececec 30px,#f0f0f0 58px,#f2f2f2 66px,#e6e6e6 71px,#dadada 75.6px,#e3e3e3 76.44px);"></div>
<div class="t " id="t64" style="left:394.90px;top:177.07px;font-size:10.6px;color:#4fb8d6;font-weight:bold;transform:scaleX(0.8294);-webkit-text-stroke:0.4px #4fb8d6;">LOREM IPSUM</div>
<div class="t nb" id="t65" style="left:395.60px;top:191.75px;font-size:7.2px;color:#9c9c9c;transform:scaleX(0.7667);">Lorem ipsum dolor sit amet,</div>
<div class="t nb" id="t66" style="left:395.60px;top:200.15px;font-size:7.2px;color:#9c9c9c;transform:scaleX(0.7618);">consectetur adipisicing elit, sed do</div>
<div class="t nb" id="t67" style="left:395.60px;top:208.55px;font-size:7.2px;color:#9c9c9c;transform:scaleX(0.7901);">eiusmod tempor incididunt ut</div>
<div class="t nb" id="t68" style="left:395.60px;top:216.95px;font-size:7.2px;color:#9c9c9c;transform:scaleX(0.7579);">labore et dolore magna aliqua.</div>
<svg style="left:485.90px;top:170.84px" width="60" height="60" viewBox="0 0 60 60"><defs><linearGradient id="g6" gradientUnits="userSpaceOnUse" x1="50" y1="8" x2="12" y2="50"><stop offset="0" stop-color="#a0dcf0"/><stop offset="0.5" stop-color="#40b2d8"/><stop offset="1" stop-color="#1c86b2"/></linearGradient><radialGradient id="sh6" gradientUnits="userSpaceOnUse" cx="24" cy="30" r="20"><stop offset="0.55" stop-color="#000" stop-opacity="0"/><stop offset="1" stop-color="#000" stop-opacity="0.08"/></radialGradient></defs><path d="M30 6 A24 24 0 0 1 30 54 Z" fill="url(#g6)"/><path d="M30 10 A20 20 0 0 0 30 50 Z" fill="url(#g6)"/><path d="M30 10 A20 20 0 0 0 30 50 Z" fill="url(#sh6)"/></svg>
<div class="t " id="t69" style="left:505.00px;top:190.56px;font-size:21px;color:#ffffff;transform:scaleX(0.8904);-webkit-text-stroke:0.35px #fff;">07</div>
<div class="a" style="left:379.6px;top:238.07999999999998px;width:136.3px;height:76.74px;background:linear-gradient(to bottom,#d3d3d3 0px,#d9d9d9 1.5px,#e4e4e4 6px,#e9e9e9 10px,#ececec 30px,#f0f0f0 58px,#f2f2f2 66px,#e6e6e6 71px,#dadada 75.6px,#e3e3e3 76.44px);"></div>
<div class="t " id="t70" style="left:394.90px;top:253.51px;font-size:10.6px;color:#d6175f;font-weight:bold;transform:scaleX(0.8294);-webkit-text-stroke:0.4px #d6175f;">LOREM IPSUM</div>
<div class="t nb" id="t71" style="left:395.60px;top:268.19px;font-size:7.2px;color:#9c9c9c;transform:scaleX(0.7667);">Lorem ipsum dolor sit amet,</div>
<div class="t nb" id="t72" style="left:395.60px;top:276.59px;font-size:7.2px;color:#9c9c9c;transform:scaleX(0.7618);">consectetur adipisicing elit, sed do</div>
<div class="t nb" id="t73" style="left:395.60px;top:284.99px;font-size:7.2px;color:#9c9c9c;transform:scaleX(0.7901);">eiusmod tempor incididunt ut</div>
<div class="t nb" id="t74" style="left:395.60px;top:293.39px;font-size:7.2px;color:#9c9c9c;transform:scaleX(0.7579);">labore et dolore magna aliqua.</div>
<svg style="left:485.90px;top:247.28px" width="60" height="60" viewBox="0 0 60 60"><defs><linearGradient id="g7" gradientUnits="userSpaceOnUse" x1="50" y1="8" x2="12" y2="50"><stop offset="0" stop-color="#f45a96"/><stop offset="0.5" stop-color="#e31a76"/><stop offset="1" stop-color="#b80c50"/></linearGradient><radialGradient id="sh7" gradientUnits="userSpaceOnUse" cx="24" cy="30" r="20"><stop offset="0.55" stop-color="#000" stop-opacity="0"/><stop offset="1" stop-color="#000" stop-opacity="0.08"/></radialGradient></defs><path d="M30 6 A24 24 0 0 1 30 54 Z" fill="url(#g7)"/><path d="M30 10 A20 20 0 0 0 30 50 Z" fill="url(#g7)"/><path d="M30 10 A20 20 0 0 0 30 50 Z" fill="url(#sh7)"/></svg>
<div class="t " id="t75" style="left:505.00px;top:267.00px;font-size:21px;color:#ffffff;transform:scaleX(0.8904);-webkit-text-stroke:0.35px #fff;">08</div>
<div class="a" style="left:379.6px;top:314.52px;width:136.3px;height:76.74px;background:linear-gradient(to bottom,#d3d3d3 0px,#d9d9d9 1.5px,#e4e4e4 6px,#e9e9e9 10px,#ececec 30px,#f0f0f0 58px,#f2f2f2 66px,#e6e6e6 71px,#dadada 75.6px,#e3e3e3 76.44px);"></div>
<div class="t " id="t76" style="left:394.90px;top:329.95px;font-size:10.6px;color:#f5b11e;font-weight:bold;transform:scaleX(0.8294);-webkit-text-stroke:0.4px #f5b11e;">LOREM IPSUM</div>
<div class="t nb" id="t77" style="left:395.60px;top:344.63px;font-size:7.2px;color:#9c9c9c;transform:scaleX(0.7667);">Lorem ipsum dolor sit amet,</div>
<div class="t nb" id="t78" style="left:395.60px;top:353.03px;font-size:7.2px;color:#9c9c9c;transform:scaleX(0.7618);">consectetur adipisicing elit, sed do</div>
<div class="t nb" id="t79" style="left:395.60px;top:361.43px;font-size:7.2px;color:#9c9c9c;transform:scaleX(0.7901);">eiusmod tempor incididunt ut</div>
<div class="t nb" id="t80" style="left:395.60px;top:369.83px;font-size:7.2px;color:#9c9c9c;transform:scaleX(0.7579);">labore et dolore magna aliqua.</div>
<svg style="left:485.90px;top:323.72px" width="60" height="60" viewBox="0 0 60 60"><defs><linearGradient id="g8" gradientUnits="userSpaceOnUse" x1="50" y1="8" x2="12" y2="50"><stop offset="0" stop-color="#fee870"/><stop offset="0.5" stop-color="#f8c22c"/><stop offset="1" stop-color="#e09616"/></linearGradient><radialGradient id="sh8" gradientUnits="userSpaceOnUse" cx="24" cy="30" r="20"><stop offset="0.55" stop-color="#000" stop-opacity="0"/><stop offset="1" stop-color="#000" stop-opacity="0.08"/></radialGradient></defs><path d="M30 6 A24 24 0 0 1 30 54 Z" fill="url(#g8)"/><path d="M30 10 A20 20 0 0 0 30 50 Z" fill="url(#g8)"/><path d="M30 10 A20 20 0 0 0 30 50 Z" fill="url(#sh8)"/></svg>
<div class="t " id="t81" style="left:505.00px;top:343.44px;font-size:21px;color:#ffffff;transform:scaleX(0.8904);-webkit-text-stroke:0.35px #fff;">09</div>
<div class="a" style="left:379.6px;top:390.96px;width:136.3px;height:76.74px;background:linear-gradient(to bottom,#d3d3d3 0px,#d9d9d9 1.5px,#e4e4e4 6px,#e9e9e9 10px,#ececec 30px,#f0f0f0 58px,#f2f2f2 66px,#e6e6e6 71px,#dadada 75.6px,#e3e3e3 76.44px);"></div>
<div class="t " id="t82" style="left:394.90px;top:406.39px;font-size:10.6px;color:#6b58a6;font-weight:bold;transform:scaleX(0.8294);-webkit-text-stroke:0.4px #6b58a6;">LOREM IPSUM</div>
<div class="t nb" id="t83" style="left:395.60px;top:421.07px;font-size:7.2px;color:#9c9c9c;transform:scaleX(0.7667);">Lorem ipsum dolor sit amet,</div>
<div class="t nb" id="t84" style="left:395.60px;top:429.47px;font-size:7.2px;color:#9c9c9c;transform:scaleX(0.7618);">consectetur adipisicing elit, sed do</div>
<div class="t nb" id="t85" style="left:395.60px;top:437.87px;font-size:7.2px;color:#9c9c9c;transform:scaleX(0.7901);">eiusmod tempor incididunt ut</div>
<div class="t nb" id="t86" style="left:395.60px;top:446.27px;font-size:7.2px;color:#9c9c9c;transform:scaleX(0.7579);">labore et dolore magna aliqua.</div>
<svg style="left:485.90px;top:400.16px" width="60" height="60" viewBox="0 0 60 60"><defs><linearGradient id="g9" gradientUnits="userSpaceOnUse" x1="50" y1="8" x2="12" y2="50"><stop offset="0" stop-color="#b0a2d6"/><stop offset="0.5" stop-color="#8070ba"/><stop offset="1" stop-color="#50438e"/></linearGradient><radialGradient id="sh9" gradientUnits="userSpaceOnUse" cx="24" cy="30" r="20"><stop offset="0.55" stop-color="#000" stop-opacity="0"/><stop offset="1" stop-color="#000" stop-opacity="0.08"/></radialGradient></defs><path d="M30 6 A24 24 0 0 1 30 54 Z" fill="url(#g9)"/><path d="M30 10 A20 20 0 0 0 30 50 Z" fill="url(#g9)"/><path d="M30 10 A20 20 0 0 0 30 50 Z" fill="url(#sh9)"/></svg>
<div class="t " id="t87" style="left:505.00px;top:419.88px;font-size:21px;color:#ffffff;transform:scaleX(0.8391);-webkit-text-stroke:0.35px #fff;">10</div>
<div class="a" style="left:45.5px;top:487.8px;width:659.5px;height:12.2px;background:#454545;"></div>
<div class="a" style="left:45.5px;top:487.8px;width:659.5px;height:1px;background:#3a3a3a;"></div>
<svg style="left:49px;top:490px" width="14" height="8" viewBox="0 0 14 8"><circle cx="3.5" cy="4" r="3" fill="none" stroke="#6e6e6e" stroke-width="1"/><path d="M7.5 1.5 H13 M8 4 H12 M8 6.5 H13" stroke="#6e6e6e" stroke-width="0.9"/></svg>
<svg style="left:69px;top:489px" width="10" height="9" viewBox="0 0 10 9"><path d="M0.5 3 V8.5 H8 V6" stroke="#d0d0d0" stroke-width="1" fill="none"/><path d="M3 6.5 Q4 2.5 7.5 2.5 V0.5 L10 3 L7.5 5.5 V4 Q5 4 3 6.5Z" fill="#d0d0d0"/></svg>
<div class="a" style="left:86.6px;top:489.5px;width:27.2px;height:10.5px;background:#b0b0b0;"></div>
<div class="t " id="t88" style="left:88.00px;top:491.30px;font-size:8.5px;color:#1e1e1e;transform:scaleX(0.7281);">66.67%</div>
<div class="a" style="left:114.8px;top:489.5px;width:9px;height:10.5px;background:#3a3a3a;"></div>
<svg style="left:116px;top:492.5px" width="7" height="5"><path d="M0.5 0.5 H6.5 L3.5 4.5Z" fill="#e0e0e0"/></svg>
<svg style="left:129px;top:491px" width="20" height="7" viewBox="0 0 20 7"><path d="M0.5 0.5 V6.5 M5.5 0.5 L1.5 3.5 L5.5 6.5Z M15 0.5 L11 3.5 L15 6.5Z" fill="#6a6a6a" stroke="#6a6a6a" stroke-width="0.8"/></svg>
<div class="a" style="left:153px;top:489.5px;width:27.5px;height:10.5px;background:#b0b0b0;"></div>
<div class="t " id="t89" style="left:155.00px;top:491.30px;font-size:8.5px;color:#1e1e1e;transform:scaleX(0.7393);">1</div>
<div class="a" style="left:181.5px;top:489.5px;width:8.5px;height:10.5px;background:#3a3a3a;"></div>
<svg style="left:182.5px;top:492.5px" width="7" height="5"><path d="M0.5 0.5 H6.5 L3.5 4.5Z" fill="#e0e0e0"/></svg>
<svg style="left:196px;top:491px" width="18" height="7" viewBox="0 0 18 7"><path d="M1 0.5 L5 3.5 L1 6.5Z M11 0.5 L15 3.5 L11 6.5Z M16.8 0.5 V6.5" fill="#6a6a6a" stroke="#6a6a6a" stroke-width="0.8"/></svg>
<div class="a" style="left:218.5px;top:488.8px;width:1px;height:11.2px;background:#3a3a3a;"></div>
<div class="t " id="t90" style="left:262.20px;top:490.52px;font-size:8.6px;color:#dcdcdc;transform:scaleX(0.7762);">Free Transform</div>
<div class="a" style="left:351px;top:488.8px;width:1px;height:11.2px;background:#3a3a3a;"></div>
<svg style="left:355px;top:491px" width="6" height="8"><path d="M0.5 0.5 L5 4 L0.5 7.5Z" fill="#e8e8e8"/></svg>
<div class="a" style="left:364.5px;top:487.8px;width:340.5px;height:12.2px;background:#353535;"></div>
<svg style="left:367px;top:490px" width="6" height="9"><path d="M5.5 0.5 L0.5 4.5 L5.5 8.5Z" fill="#f0f0f0"/></svg>
<svg style="left:696px;top:490px" width="6" height="9"><path d="M0.5 0.5 L5.5 4.5 L0.5 8.5Z" fill="#f0f0f0"/></svg>
<div class="a" style="left:528px;top:488.7px;width:10.7px;height:10.5px;background:#a8a8a8;"></div>
<div class="a" style="left:705px;top:487.8px;width:12px;height:12.2px;background:#474747;"></div>
<div class="a" style="left:705px;top:57px;width:12px;height:431px;background:#383838;"></div>
<div class="a" style="left:705.6px;top:267px;width:10.6px;height:11px;background:#a9a9a9;"></div>
<div class="a" style="left:705px;top:476.5px;width:12px;height:11.3px;background:#333333;"></div>
<svg style="left:707px;top:479px" width="8" height="6"><path d="M0.5 0.5 H7.5 L4 5Z" fill="#f0f0f0"/></svg>
<div class="a" style="left:555.9px;top:49.3px;width:162.09999999999997px;height:132.7px;background:#2e2e2e;"></div>
<div class="a" style="left:556.4px;top:51.7px;width:160.39999999999998px;height:11.2px;background:#3a3a3a;"></div>
<div class="a" style="left:556.9px;top:51.7px;width:30.8px;height:11.5px;background:#4d4d4d;"></div>
<div class="a" style="left:556.4px;top:62.9px;width:160.39999999999998px;height:118.6px;background:#4d4d4d;"></div>
<div class="a" style="left:634.8px;top:52.5px;width:1px;height:10px;background:#303030;"></div>
<div class="a" style="left:661.7px;top:52.5px;width:1px;height:10px;background:#303030;"></div>
<div class="a" style="left:701.7px;top:52.5px;width:1px;height:10px;background:#303030;"></div>
<svg style="left:559.8px;top:54.5px" width="4" height="7" viewBox="0 0 4 7"><path d="M0.3 2.6 L2 0.5 L3.7 2.6 M0.3 4.4 L2 6.5 L3.7 4.4" fill="none" stroke="#c8c8c8" stroke-width="0.8"/></svg>
<div class="t " id="t91" style="left:565.50px;top:52.75px;font-size:8.8px;color:#e8e8e8;font-weight:bold;transform:scaleX(0.7140);">Color</div>
<div class="t " id="t92" style="left:592.50px;top:52.75px;font-size:8.8px;color:#a8a8a8;transform:scaleX(0.7774);">Color Guide</div>
<div class="t " id="t93" style="left:640.00px;top:52.75px;font-size:8.8px;color:#a8a8a8;transform:scaleX(0.7592);">Kuler</div>
<svg style="left:689.5px;top:55.5px" width="8" height="5" viewBox="0 0 8 5"><path d="M0.5 0.3 L3 2.5 L0.5 4.7Z M4 0.3 L6.5 2.5 L4 4.7Z" fill="#d8d8d8"/></svg>
<svg style="left:704.5px;top:55.5px" width="10" height="5" viewBox="0 0 10 5"><path d="M0.5 1.5 H3.5 L2 3.2Z" fill="#d0d0d0"/><rect x="4.4" y="0" width="5" height="5" fill="#8a8a8a"/></svg>
<svg style="left:560.5px;top:68px" width="9" height="9" viewBox="0 0 9 9"><rect x="3" y="3" width="5.5" height="5.5" fill="#1e1e1e" stroke="#bbb" stroke-width="0.7"/><rect x="0.5" y="0.5" width="4.5" height="4.5" fill="#f0f0f0" stroke="#222" stroke-width="0.6"/></svg>
<svg style="left:574px;top:68.5px" width="7" height="7" viewBox="0 0 7 7"><path d="M0.5 1.8 L2 0.3 M0.5 1.8 L2 3.3 M0.5 1.8 H4.5 Q5.5 1.8 5.5 3 V6 M4 4.8 L5.5 6.3 L7 4.8" stroke="#c8c8c8" stroke-width="0.8" fill="none"/></svg>
<div class="a" style="left:567px;top:86.3px;width:13.5px;height:13.3px;background:#ffffff;"></div>
<div class="a" style="left:571px;top:90.3px;width:5.5px;height:5.5px;background:#3a3a3a;"></div>
<svg style="left:567px;top:86.3px" width="14" height="14"><path d="M0.5 13 L13 0.5" stroke="#e01010" stroke-width="1.4"/></svg>
<div class="a" style="left:560.9px;top:80px;width:12.3px;height:12.6px;background:#d6d7d9;border:1px solid #f0f0f0;"></div>
<div class="t " id="t94" style="left:591.00px;top:71.65px;font-size:8.8px;color:#c4c4c4;transform:scaleX(0.7862);-webkit-text-stroke-width:0.4px;">C</div>
<div class="a" style="left:604px;top:74.7px;width:67.7px;height:3px;background:linear-gradient(to right,#f8f8f8,#1aa6dc);border-radius:1px;"></div>
<svg style="left:601.2px;top:77.5px" width="6" height="5" viewBox="0 0 6 5"><path d="M0.3 4.5 L3 0.3 L5.7 4.5Z" fill="#d8d8d8"/></svg>
<div class="a" style="left:676.7px;top:69.4px;width:21.6px;height:12.8px;background:#b3b3b3;border:1px solid #303030;"></div>
<div class="t " id="t95" style="left:678.90px;top:71.45px;font-size:8.8px;color:#1a1a1a;transform:scaleX(0.7338);">0</div>
<div class="t " id="t96" style="left:700.00px;top:71.45px;font-size:8.8px;color:#c0c0c0;transform:scaleX(0.8303);">%</div>
<div class="t " id="t97" style="left:591.00px;top:88.45px;font-size:8.8px;color:#c4c4c4;transform:scaleX(0.6823);-webkit-text-stroke-width:0.4px;">M</div>
<div class="a" style="left:604px;top:91.5px;width:67.7px;height:3px;background:linear-gradient(to right,#f8f8f8,#de1a84);border-radius:1px;"></div>
<svg style="left:601.2px;top:94.3px" width="6" height="5" viewBox="0 0 6 5"><path d="M0.3 4.5 L3 0.3 L5.7 4.5Z" fill="#d8d8d8"/></svg>
<div class="a" style="left:676.7px;top:86.30000000000001px;width:21.6px;height:12.8px;background:#b3b3b3;border:1px solid #303030;"></div>
<div class="t " id="t98" style="left:678.90px;top:88.35px;font-size:8.8px;color:#1a1a1a;transform:scaleX(0.7338);">0</div>
<div class="t " id="t99" style="left:700.00px;top:88.35px;font-size:8.8px;color:#c0c0c0;transform:scaleX(0.8303);">%</div>
<div class="t " id="t100" style="left:591.00px;top:105.25px;font-size:8.8px;color:#c4c4c4;transform:scaleX(0.8511);-webkit-text-stroke-width:0.4px;">Y</div>
<div class="a" style="left:604px;top:108.3px;width:67.7px;height:3px;background:linear-gradient(to right,#f8f8f8,#f2d21a);border-radius:1px;"></div>
<svg style="left:601.2px;top:111.1px" width="6" height="5" viewBox="0 0 6 5"><path d="M0.3 4.5 L3 0.3 L5.7 4.5Z" fill="#d8d8d8"/></svg>
<div class="a" style="left:676.7px;top:103.2px;width:21.6px;height:12.8px;background:#b3b3b3;border:1px solid #303030;"></div>
<div class="t " id="t101" style="left:678.90px;top:105.25px;font-size:8.8px;color:#1a1a1a;transform:scaleX(0.7338);">0</div>
<div class="t " id="t102" style="left:700.00px;top:105.25px;font-size:8.8px;color:#c0c0c0;transform:scaleX(0.8303);">%</div>
<div class="t " id="t103" style="left:591.00px;top:122.05px;font-size:8.8px;color:#c4c4c4;transform:scaleX(0.8511);-webkit-text-stroke-width:0.4px;">K</div>
<div class="a" style="left:604px;top:125.10000000000001px;width:67.7px;height:3px;background:linear-gradient(to right,#f8f8f8,#1a1a1a);border-radius:1px;"></div>
<svg style="left:614.8000000000001px;top:127.9px" width="6" height="5" viewBox="0 0 6 5"><path d="M0.3 4.5 L3 0.3 L5.7 4.5Z" fill="#d8d8d8"/></svg>
<div class="a" style="left:676.7px;top:120.1px;width:21.6px;height:12.8px;background:#b3b3b3;border:1px solid #303030;"></div>
<div class="t " id="t104" style="left:678.90px;top:122.15px;font-size:8.8px;color:#1a1a1a;transform:scaleX(0.8166);">20</div>
<div class="t " id="t105" style="left:700.00px;top:122.15px;font-size:8.8px;color:#c0c0c0;transform:scaleX(0.8303);">%</div>
<div class="a" style="left:560.5px;top:141.5px;width:9px;height:8.7px;background:#ffffff;"></div>
<svg style="left:560.5px;top:141.5px" width="9" height="9"><path d="M0.3 8.5 L8.7 0.2" stroke="#e01010" stroke-width="1.3"/></svg>
<div class="a" style="left:569.5px;top:141.5px;width:8.6px;height:8.7px;background:#000000;"></div>
<div class="a" style="left:578.1px;top:141.5px;width:8.6px;height:8.7px;background:#ffffff;"></div>
<div class="a" style="left:561.4px;top:157.6px;width:144.2px;height:14.2px;background:linear-gradient(to bottom,rgba(255,255,255,0.9) 0%,rgba(255,255,255,0.25) 30%,rgba(255,255,255,0) 48%,rgba(0,0,0,0) 55%,rgba(0,0,0,0.35) 75%,rgba(0,0,0,0.9) 100%),linear-gradient(to right,#ed1c24 0%,#f7941d 8%,#fff200 15%,#8dc63f 30%,#00a651 40%,#00aeef 52%,#2e3192 66%,#92278f 80%,#ec008c 90%,#ed1c24 100%);"></div>
<svg style="left:700px;top:166px" width="8" height="8" viewBox="0 0 8 8"><path d="M7 2 L2 7 M7 5 L5 7" stroke="#777" stroke-width="0.8"/></svg>
<div class="a" style="left:558px;top:176.6px;width:157px;height:1px;background:#444444;"></div>
<div class="a" style="left:629.6px;top:177.8px;width:14px;height:2.5px;background:#2e2e2e;"></div>
<div class="a" style="left:717px;top:42.3px;width:26.5px;height:457.7px;background:#3a3a3a;"></div>
<div class="a" style="left:718.3px;top:50.5px;width:24.5px;height:449.5px;background:#4a4a4a;"></div>
<div class="a" style="left:717px;top:42.3px;width:183px;height:8.2px;background:#2e2e2e;"></div>
<svg style="left:735.5px;top:44px" width="6" height="5" viewBox="0 0 6 5"><path d="M2.8 0.3 L0.6 2.5 L2.8 4.7 M5.6 0.3 L3.4 2.5 L5.6 4.7" stroke="#c0c0c0" stroke-width="0.9" fill="none"/></svg>
<svg style="left:895px;top:44px" width="5" height="5" viewBox="0 0 5 5"><path d="M0.5 0.3 L2.7 2.5 L0.5 4.7 M3.3 0.3 L5.5 2.5 L3.3 4.7" stroke="#c0c0c0" stroke-width="0.9" fill="none"/></svg>
<div class="a" style="left:718.3px;top:115.60000000000001px;width:24.5px;height:1.6px;background:#363636;"></div>
<div class="a" style="left:718.3px;top:181.2px;width:24.5px;height:1.6px;background:#363636;"></div>
<div class="a" style="left:718.3px;top:247.2px;width:24.5px;height:1.6px;background:#363636;"></div>
<div class="a" style="left:718.3px;top:274.7px;width:24.5px;height:1.6px;background:#363636;"></div>
<div class="a" style="left:724.6px;top:53.4px;width:15.4px;height:2.2px;background:#262626;"></div>
<div class="a" style="left:724.6px;top:119.2px;width:15.4px;height:2.2px;background:#262626;"></div>
<div class="a" style="left:724.6px;top:185.6px;width:15.4px;height:2.2px;background:#262626;"></div>
<div class="a" style="left:724.6px;top:251.5px;width:15.4px;height:2.2px;background:#262626;"></div>
<div class="a" style="left:718.3px;top:276.3px;width:24.5px;height:223.7px;background:#4a4a4a;"></div>
<svg style="left:717px;top:0px" width="27" height="280" viewBox="0 0 27 280"><rect x="4.8" y="59.5" width="18" height="15.5" fill="#353535"/><path d="M7 67 Q7 61.5 14 61.5 Q21 61.5 21 66.5 Q21 70 17.5 69.5 Q15.5 69.3 16 71.5 Q16.3 73 13.5 73 Q7 73 7 67Z" fill="#d0d0d0"/><circle cx="10.5" cy="66.5" r="1.1" fill="#353535"/><circle cx="13" cy="64.3" r="1.1" fill="#353535"/><circle cx="16.5" cy="64.3" r="1.1" fill="#353535"/><circle cx="12" cy="69.8" r="1.2" fill="#353535"/><defs><linearGradient id="cgd" x1="0" y1="0" x2="1" y2="1"><stop offset="0" stop-color="#f0f0f0"/><stop offset="1" stop-color="#555"/></linearGradient></defs><path d="M8.5 78.5 Q18.5 80 20 91 L8.5 91 Z" fill="url(#cgd)" stroke="#d0d0d0" stroke-width="0.8"/><circle cx="12.5" cy="105" r="4.2" fill="none" stroke="#d0d0d0" stroke-width="1.2"/><path d="M9 105 L19 99.5 M9 105 L19 110.5 M9 105 H14" stroke="#d0d0d0" stroke-width="1"/><circle cx="19" cy="99.5" r="1.6" fill="#d0d0d0"/><circle cx="19" cy="110.5" r="1.6" fill="#d0d0d0"/><circle cx="9" cy="105" r="1.5" fill="#d0d0d0"/><rect x="7.5" y="128.5" width="12.5" height="7.5" fill="none" stroke="#d0d0d0" stroke-width="0.9"/><rect x="8.6" y="129.6" width="2.8" height="2.4" fill="#d0d0d0"/><rect x="12.5" y="129.6" width="2.8" height="2.4" fill="#d0d0d0"/><rect x="16.4" y="129.6" width="2.8" height="2.4" fill="#d0d0d0"/><rect x="8.6" y="133.0" width="2.8" height="2.4" fill="#d0d0d0"/><rect x="12.5" y="133.0" width="2.8" height="2.4" fill="#d0d0d0"/><rect x="16.4" y="133.0" width="2.8" height="2.4" fill="#d0d0d0"/><rect x="10" y="150.5" width="6.5" height="7.5" fill="#d0d0d0"/><path d="M11 150 L9 144.5 M13 150 L13.5 144 M15.5 150 L18 145" stroke="#d0d0d0" stroke-width="1.2"/><circle cx="13.5" cy="166.5" r="2.8" fill="#d0d0d0"/><circle cx="10.2" cy="171" r="2.8" fill="#d0d0d0"/><circle cx="16.8" cy="171" r="2.8" fill="#d0d0d0"/><path d="M13.5 170 L11.5 176.5 H15.5Z" fill="#d0d0d0"/><rect x="7.5" y="192.8" width="12.5" height="1.6" fill="#d0d0d0"/><rect x="7.5" y="196.6" width="12.5" height="1.6" fill="#d0d0d0"/><rect x="7.5" y="200.6" width="12.5" height="1.8" fill="#d0d0d0"/><defs><linearGradient id="sg2" x1="0" y1="0" x2="1" y2="0"><stop offset="0" stop-color="#222"/><stop offset="1" stop-color="#e0e0e0"/></linearGradient></defs><rect x="8" y="213.3" width="11.5" height="8.3" fill="url(#sg2)" stroke="#d0d0d0" stroke-width="0.9"/><circle cx="12" cy="235.5" r="4.2" fill="#d0d0d0"/><circle cx="15" cy="238.5" r="4.2" fill="#888" stroke="#d0d0d0" stroke-width="1"/><rect x="11" y="259" width="8.5" height="8.5" fill="none" stroke="#d0d0d0" stroke-width="1"/><rect x="7.5" y="264" width="6" height="6" fill="#4a4a4a" stroke="#d0d0d0" stroke-width="1"/><rect x="9.5" y="266" width="2.5" height="2.5" fill="#d0d0d0"/></svg>
<div class="a" style="left:743.5px;top:50.5px;width:156.5px;height:449.5px;background:#2e2e2e;"></div>
<div class="a" style="left:745px;top:50.5px;width:155px;height:449.5px;background:#4d4d4d;"></div>
<div class="a" style="left:744.5px;top:51px;width:155.5px;height:11.2px;background:#383838;"></div>
<div class="a" style="left:745px;top:51px;width:32.700000000000045px;height:11.7px;background:#4d4d4d;"></div>
<div class="t " id="t106" style="left:749.80px;top:52.75px;font-size:8.8px;color:#f0f0f0;transform:scaleX(0.8004);-webkit-text-stroke:0.25px #f0f0f0;">Actions</div>
<svg style="left:891.5px;top:54.5px" width="9" height="5" viewBox="0 0 9 5"><path d="M0.5 1.5 H3.5 L2 3.2Z" fill="#d0d0d0"/><rect x="4.4" y="0" width="5" height="5" fill="#8a8a8a"/></svg>
<div class="a" style="left:748.9px;top:66.7px;width:143.1px;height:82.3px;background:#3c3c3c;"></div>
<svg style="left:0;top:0" width="900" height="160" viewBox="0 0 900 160"><defs><clipPath id="acl"><rect x="745" y="66.7" width="147" height="82.3"/></clipPath></defs><g clip-path="url(#acl)"><rect x="749" y="66.7" width="13" height="12.2" fill="#505050"/><rect x="763" y="66.7" width="13.2" height="12.2" fill="#505050"/><rect x="777" y="66.7" width="114.5" height="12.2" fill="#505050"/><path d="M752 73.5 L754.3 76.0 L758.5 70.3" stroke="#d4d4d4" stroke-width="1.1" fill="none"/><rect x="765.3" y="69.2" width="7.5" height="7" fill="#5a5a5a" stroke="#a8a8a8" stroke-width="0.8"/><rect x="766.5" y="71.2" width="5" height="1.3" fill="#a8a8a8"/><path d="M779 70.7 H784.5 L781.75 74.2Z" fill="#d8d8d8"/><path d="M790.7 69.5 H794 L795 70.5 H799.6 V76.2 H790.7Z" fill="#bdbdbd"/><rect x="749" y="79.75" width="13" height="12.2" fill="#4c4c4c"/><rect x="763" y="79.75" width="13.2" height="12.2" fill="#4c4c4c"/><rect x="777" y="79.75" width="114.5" height="12.2" fill="#4c4c4c"/><path d="M752 86.55 L754.3 89.05 L758.5 83.35" stroke="#d4d4d4" stroke-width="1.1" fill="none"/><path d="M793 83.25 L797 85.75 L793 88.25Z" fill="#d8d8d8"/><rect x="749" y="92.80000000000001" width="13" height="12.2" fill="#4c4c4c"/><rect x="763" y="92.80000000000001" width="13.2" height="12.2" fill="#4c4c4c"/><rect x="777" y="92.80000000000001" width="114.5" height="12.2" fill="#4c4c4c"/><path d="M752 99.60000000000001 L754.3 102.10000000000001 L758.5 96.4" stroke="#d4d4d4" stroke-width="1.1" fill="none"/><path d="M793 96.30000000000001 L797 98.80000000000001 L793 101.30000000000001Z" fill="#d8d8d8"/><rect x="749" y="105.85000000000001" width="13" height="12.2" fill="#4c4c4c"/><rect x="763" y="105.85000000000001" width="13.2" height="12.2" fill="#4c4c4c"/><rect x="777" y="105.85000000000001" width="114.5" height="12.2" fill="#4c4c4c"/><path d="M752 112.65 L754.3 115.15 L758.5 109.45" stroke="#d4d4d4" stroke-width="1.1" fill="none"/><path d="M793 109.35000000000001 L797 111.85000000000001 L793 114.35000000000001Z" fill="#d8d8d8"/><rect x="749" y="118.9" width="13" height="12.2" fill="#4c4c4c"/><rect x="763" y="118.9" width="13.2" height="12.2" fill="#4c4c4c"/><rect x="777" y="118.9" width="114.5" height="12.2" fill="#4c4c4c"/><path d="M752 125.7 L754.3 128.2 L758.5 122.5" stroke="#d4d4d4" stroke-width="1.1" fill="none"/><rect x="765.3" y="121.2" width="7.5" height="7.5" fill="#7a7a7a" stroke="#9a9a9a" stroke-width="0.8"/><path d="M793 122.4 L797 124.9 L793 127.4Z" fill="#d8d8d8"/><rect x="749" y="131.95" width="13" height="12.2" fill="#4c4c4c"/><rect x="763" y="131.95" width="13.2" height="12.2" fill="#4c4c4c"/><rect x="777" y="131.95" width="114.5" height="12.2" fill="#4c4c4c"/><path d="M752 138.75 L754.3 141.25 L758.5 135.55" stroke="#d4d4d4" stroke-width="1.1" fill="none"/><rect x="765.3" y="134.25" width="7.5" height="7.5" fill="#7a7a7a" stroke="#9a9a9a" stroke-width="0.8"/><path d="M793 135.45 L797 137.95 L793 140.45Z" fill="#d8d8d8"/><rect x="749" y="145.0" width="13" height="12.2" fill="#4c4c4c"/><rect x="763" y="145.0" width="13.2" height="12.2" fill="#4c4c4c"/><rect x="777" y="145.0" width="114.5" height="12.2" fill="#4c4c4c"/><path d="M752 151.8 L754.3 154.3 L758.5 148.60000000000002" stroke="#d4d4d4" stroke-width="1.1" fill="none"/><rect x="765.3" y="147.3" width="7.5" height="7.5" fill="#7a7a7a" stroke="#9a9a9a" stroke-width="0.8"/><path d="M793 148.5 L797 151.0 L793 153.5Z" fill="#d8d8d8"/></g></svg>
<div class="t " id="t107" style="left:802.60px;top:69.15px;font-size:8.8px;color:#d8d8d8;transform:scaleX(0.7412);">Default Actions</div>
<div class="t " id="t108" style="left:803.10px;top:82.20px;font-size:8.8px;color:#d8d8d8;transform:scaleX(0.7464);">Opacity 60 (selection)</div>
<div class="t " id="t109" style="left:803.10px;top:95.25px;font-size:8.8px;color:#d8d8d8;transform:scaleX(0.7453);">Opacity 40 Screen (selection)</div>
<div class="t " id="t110" style="left:803.10px;top:108.30px;font-size:8.8px;color:#d8d8d8;transform:scaleX(0.7520);">Apply Default Style (selecti...</div>
<div class="t " id="t111" style="left:803.10px;top:121.35px;font-size:8.8px;color:#d8d8d8;transform:scaleX(0.7380);">Save For Web GIF 64 Dithe...</div>
<div class="t " id="t112" style="left:803.10px;top:134.40px;font-size:8.8px;color:#d8d8d8;transform:scaleX(0.7315);">Save For Web JPG Medium</div>
<div class="a" style="left:777px;top:144.2px;width:114px;height:4.8px;overflow:hidden"><div class="t" style="left:26px;top:2.3px;font-size:8.8px;color:#d8d8d8;transform:scaleX(0.8)">Save For Web PNG 24</div></div>
<div class="a" style="left:892px;top:66.7px;width:8px;height:82.3px;background:#3a3a3a;"></div>
<div class="a" style="left:893px;top:78.2px;width:7px;height:17px;background:#a0a0a0;"></div>
<svg style="left:893px;top:70px" width="7" height="5"><path d="M0.5 4.5 L3.5 0.5 L6.5 4.5Z" fill="#e8e8e8"/></svg>
<svg style="left:893px;top:143px" width="7" height="5"><path d="M0.5 0.5 L3.5 4.5 L6.5 0.5Z" fill="#e8e8e8"/></svg>
<svg style="left:790px;top:152px" width="100" height="10" viewBox="0 0 100 10"><rect x="2.4" y="1.5" width="6.3" height="6.5" fill="#6a6a6a"/><circle cx="22.5" cy="4.8" r="3.6" fill="#6a6a6a"/><path d="M37 1 L44 4.8 L37 8.5Z" fill="#6a6a6a"/><path d="M53.5 2 H57 L58 3 H62 V8.5 H53.5Z" fill="#d8d8d8"/><path d="M71.8 2 H78.4 V8.5 H71.8Z" fill="#d8d8d8"/><path d="M71.8 2 H75 V5 H71.8Z" fill="#4d4d4d"/><path d="M89 3 H96 M90 3 V8.5 H95 V3 M91.5 1.5 H93.5" stroke="#6a6a6a" stroke-width="1" fill="none"/></svg>
<div class="a" style="left:745px;top:163px;width:155px;height:2.8px;background:#2e2e2e;"></div>
<div class="a" style="left:744.5px;top:165.8px;width:155.5px;height:11.2px;background:#383838;"></div>
<div class="a" style="left:745px;top:165.8px;width:25.200000000000045px;height:11.7px;background:#4d4d4d;"></div>
<div class="t " id="t113" style="left:749.20px;top:167.55px;font-size:8.8px;color:#f0f0f0;transform:scaleX(0.7787);-webkit-text-stroke:0.25px #f0f0f0;">Links</div>
<div class="a" style="left:770.2px;top:165.8px;width:56.799999999999955px;height:11.2px;background:#3c3c3c;"></div>
<div class="a" style="left:826px;top:166.8px;width:1px;height:9.2px;background:#2f2f2f;"></div>
<div class="t " id="t114" style="left:775.60px;top:167.55px;font-size:8.8px;color:#a8a8a8;transform:scaleX(0.8074);">Document Info</div>
<svg style="left:891.5px;top:169.3px" width="9" height="5" viewBox="0 0 9 5"><path d="M0.5 1.5 H3.5 L2 3.2Z" fill="#d0d0d0"/><rect x="4.4" y="0" width="5" height="5" fill="#8a8a8a"/></svg>
<div class="a" style="left:748.4px;top:180.8px;width:151.6px;height:83.2px;background:#444444;border:1px solid #3a3a3a;"></div>
<svg style="left:754px;top:268px" width="6" height="8"><path d="M0.5 0.5 L5.5 4 L0.5 7.5Z" fill="#e0e0e0"/></svg>
<svg style="left:820px;top:266px" width="66" height="10" viewBox="0 0 66 10"><rect x="2.7" y="3" width="5" height="4" rx="2" fill="none" stroke="#6e6e6e" stroke-width="1"/><rect x="7" y="3" width="5" height="4" rx="2" fill="none" stroke="#6e6e6e" stroke-width="1"/><path d="M18.3 5 H24 M22 3 L24.5 5 L22 7 M25 1.5 H29 V8.5 H25" stroke="#6e6e6e" stroke-width="1" fill="none"/><path d="M41 2.5 A3.5 3.5 0 1 1 39.5 7.5 M37.5 5 A3.5 3.5 0 0 1 42 1.5" stroke="#6e6e6e" stroke-width="1" fill="none"/><path d="M55 8.5 L62 1.5 M54.5 9 L56 7.5" stroke="#6e6e6e" stroke-width="1.2" fill="none"/></svg>
<div class="a" style="left:745px;top:276.7px;width:155px;height:2.6px;background:#2e2e2e;"></div>
<div class="a" style="left:744.5px;top:280.3px;width:155.5px;height:11.2px;background:#383838;"></div>
<div class="a" style="left:745px;top:280.3px;width:38.200000000000045px;height:11.2px;background:#3c3c3c;"></div>
<div class="a" style="left:782.2px;top:281.3px;width:1px;height:9.2px;background:#2f2f2f;"></div>
<div class="t " id="t115" style="left:749.60px;top:282.05px;font-size:8.8px;color:#a8a8a8;transform:scaleX(0.7660);">Variables</div>
<div class="a" style="left:783.2px;top:280.3px;width:45.5px;height:11.7px;background:#4d4d4d;"></div>
<div class="t " id="t116" style="left:788.00px;top:282.05px;font-size:8.8px;color:#f0f0f0;transform:scaleX(0.7586);-webkit-text-stroke:0.25px #f0f0f0;">Appearance</div>
<svg style="left:891.5px;top:283.8px" width="9" height="5" viewBox="0 0 9 5"><path d="M0.5 1.5 H3.5 L2 3.2Z" fill="#d0d0d0"/><rect x="4.4" y="0" width="5" height="5" fill="#8a8a8a"/></svg>
<div class="a" style="left:748.4px;top:295.4px;width:151.6px;height:72.6px;background:#444444;border:1px solid #3a3a3a;"></div>
<div class="a" style="left:748.9px;top:295.9px;width:151.1px;height:16.3px;background:#4f4f4f;"></div>
<div class="a" style="left:748.9px;top:312.9px;width:151.1px;height:15.6px;background:#4f4f4f;"></div>
<div class="a" style="left:748.9px;top:329.2px;width:151.1px;height:16.5px;background:#5d6678;"></div>
<div class="a" style="left:764px;top:329.2px;width:1px;height:16.5px;background:#4a5262;"></div>
<div class="a" style="left:750.8px;top:298.5px;width:12px;height:12px;background:#ffffff;"></div>
<div class="t " id="t117" style="left:779.60px;top:299.75px;font-size:8.8px;color:#ececec;font-weight:bold;transform:scaleX(0.7773);">Envelope</div>
<div class="t " id="t118" style="left:779.60px;top:316.55px;font-size:8.8px;color:#e6e6e6;transform:scaleX(0.7269);">Contents</div>
<div class="t " id="t119" style="left:779.60px;top:333.75px;font-size:8.8px;color:#e8902c;transform:scaleX(0.7652);">Opacity:</div>
<svg style="left:779.6px;top:343px" width="26" height="2"><path d="M0 0.5 H25" stroke="#c07a28" stroke-width="1" stroke-dasharray="1 1"/></svg>
<div class="t " id="t120" style="left:807.90px;top:333.75px;font-size:8.8px;color:#e8e8e8;transform:scaleX(0.7462);">Default</div>
<svg style="left:752px;top:334px" width="9" height="7" viewBox="0 0 9 7"><ellipse cx="4.5" cy="3.5" rx="4" ry="2.8" fill="none" stroke="#7a8090" stroke-width="0.9"/><circle cx="4.5" cy="3.5" r="1.3" fill="#7a8090"/></svg>
<svg style="left:750px;top:369px" width="140" height="12" viewBox="0 0 140 12"><rect x="3" y="1.5" width="6.5" height="6.5" fill="none" stroke="#d8d8d8" stroke-width="1.1"/><rect x="20.2" y="1.2" width="7" height="7" fill="#999" stroke="#bdbdbd" stroke-width="0.8"/><rect x="22" y="3" width="3.5" height="3.5" fill="#666"/><circle cx="97" cy="5" r="3.8" fill="none" stroke="#6a6a6a" stroke-width="1"/><path d="M94.5 2.5 L99.5 7.5" stroke="#6a6a6a" stroke-width="1"/><rect x="111" y="1" width="8" height="8" fill="#666"/><path d="M128 2.5 H136 M129.5 2.5 V9.5 H134.5 V2.5 M131 1 H133" stroke="#bdbdbd" stroke-width="1" fill="none"/></svg>
<div class="t " id="t121" style="left:785.60px;top:369.31px;font-size:10.5px;color:#d8d8d8;font-family:'Liberation Serif',serif;transform:scaleX(1.1876);font-style:italic;">fx</div>
<div class="a" style="left:794px;top:376.5px;width:2.5px;height:1px;background:#d8d8d8;"></div>
<div class="a" style="left:745px;top:380.6px;width:155px;height:2.8px;background:#2e2e2e;"></div>
<div class="a" style="left:744.5px;top:384.5px;width:155.5px;height:11.2px;background:#383838;"></div>
<div class="a" style="left:745px;top:384.5px;width:28.600000000000023px;height:11.7px;background:#4d4d4d;"></div>
<div class="t " id="t122" style="left:750.00px;top:386.25px;font-size:8.8px;color:#f0f0f0;transform:scaleX(0.6665);-webkit-text-stroke:0.25px #f0f0f0;">Layers</div>
<div class="a" style="left:773.6px;top:384.5px;width:40.39999999999998px;height:11.2px;background:#3c3c3c;"></div>
<div class="a" style="left:813px;top:385.5px;width:1px;height:9.2px;background:#2f2f2f;"></div>
<div class="t " id="t123" style="left:777.90px;top:386.25px;font-size:8.8px;color:#a8a8a8;transform:scaleX(0.8154);">Artboards</div>
<svg style="left:891.5px;top:388.0px" width="9" height="5" viewBox="0 0 9 5"><path d="M0.5 1.5 H3.5 L2 3.2Z" fill="#d0d0d0"/><rect x="4.4" y="0" width="5" height="5" fill="#8a8a8a"/></svg>
<div class="a" style="left:748.4px;top:399.2px;width:143.6px;height:86.3px;background:#3a3a3a;"></div>
<svg style="left:0;top:0" width="900" height="500" viewBox="0 0 900 500"><rect x="749" y="399.2" width="13.5" height="13.6" fill="#4c4c4c"/><rect x="763.2" y="399.2" width="13.5" height="13.6" fill="#4c4c4c"/><rect x="777.3" y="399.2" width="90.5" height="13.6" fill="#4c4c4c"/><rect x="868.5" y="399.2" width="23.5" height="13.6" fill="#4c4c4c"/><rect x="777.2" y="399.2" width="2" height="13.6" fill="#4bd14b"/><path d="M783.2 404.2 H788 L785.6 407.7Z" fill="#d8d8d8"/><rect x="794.7" y="400.7" width="11.3" height="11" fill="#ffffff"/><path d="M800.3000000000001 401.2 L797.7 406.7 L799.3000000000001 406.7 L798.2 411.2 L800.3000000000001 407.7 L802.4000000000001 411.2 L801.3000000000001 406.7 L802.9000000000001 406.7Z" fill="#111"/><circle cx="875.3" cy="406.0" r="3.2" fill="none" stroke="#c0c0c0" stroke-width="0.9"/><circle cx="875.3" cy="406.0" r="0.9" fill="#9a9a9a"/><rect x="749" y="413.58" width="13.5" height="13.6" fill="#535353"/><rect x="763.2" y="413.58" width="13.5" height="13.6" fill="#535353"/><rect x="777.3" y="413.58" width="90.5" height="13.6" fill="#535353"/><rect x="868.5" y="413.58" width="23.5" height="13.6" fill="#535353"/><rect x="777.2" y="413.58" width="2" height="13.6" fill="#4bd14b"/><path d="M752 420.58 Q756 416.08 760 420.58 Q756 424.08 752 420.58Z" fill="none" stroke="#7a7a7a" stroke-width="1"/><circle cx="756" cy="420.18" r="1.6" fill="#7a7a7a"/><path d="M797 417.58 L801.2 420.38 L797 423.18Z" fill="#d8d8d8"/><rect x="808.3" y="415.08" width="11.3" height="11" fill="#ffffff"/><path d="M813.9 415.58 L811.3 421.08 L812.9 421.08 L811.8 425.58 L813.9 422.08 L816.0 425.58 L814.9 421.08 L816.5 421.08Z" fill="#111"/><circle cx="875.3" cy="420.38" r="3.2" fill="none" stroke="#c0c0c0" stroke-width="0.9"/><circle cx="875.3" cy="420.38" r="0.9" fill="#9a9a9a"/><rect x="749" y="427.96" width="13.5" height="13.6" fill="#4c4c4c"/><rect x="763.2" y="427.96" width="13.5" height="13.6" fill="#4c4c4c"/><rect x="777.3" y="427.96" width="90.5" height="13.6" fill="#4c4c4c"/><rect x="868.5" y="427.96" width="23.5" height="13.6" fill="#4c4c4c"/><rect x="777.2" y="427.96" width="2" height="13.6" fill="#4a7be0"/><path d="M752 434.96 Q756 430.46 760 434.96 Q756 438.46 752 434.96Z" fill="none" stroke="#d0d0d0" stroke-width="1"/><circle cx="756" cy="434.56" r="1.6" fill="#d0d0d0"/><path d="M783.2 432.96 H788 L785.6 436.46Z" fill="#d8d8d8"/><rect x="794.7" y="429.46" width="11.3" height="11" fill="#ffffff"/><rect x="796.2" y="432.96" width="8" height="4" fill="#b8b8b8"/><path d="M796.7 436.96 L799.7 432.96 L803.7 435.96" stroke="#b03020" stroke-width="1.5" fill="none"/><circle cx="875.3" cy="434.76" r="3.2" fill="none" stroke="#c0c0c0" stroke-width="0.9"/><circle cx="875.3" cy="434.76" r="0.9" fill="#9a9a9a"/><rect x="883" y="432.96" width="3.5" height="3.5" fill="#4a7be0" stroke="#222" stroke-width="0.5"/><path d="M887 429.46 H891 V433.46Z" fill="#e0e0e0"/><rect x="749" y="442.34" width="13.5" height="13.6" fill="#535353"/><rect x="763.2" y="442.34" width="13.5" height="13.6" fill="#535353"/><rect x="777.3" y="442.34" width="90.5" height="13.6" fill="#535353"/><rect x="868.5" y="442.34" width="23.5" height="13.6" fill="#535353"/><rect x="777.2" y="442.34" width="2" height="13.6" fill="#4a7be0"/><path d="M752 449.34 Q756 444.84 760 449.34 Q756 452.84 752 449.34Z" fill="none" stroke="#d0d0d0" stroke-width="1"/><circle cx="756" cy="448.94" r="1.6" fill="#d0d0d0"/><rect x="808.3" y="443.84" width="11.3" height="11" fill="#ffffff"/><path d="M811.3 445.34 L816.3 444.84 L816.3 454.34 L811.3 453.34Z" fill="#a84a28"/><rect x="811.3" y="445.34" width="1.5" height="8" fill="#6a2a18"/><circle cx="875.3" cy="449.14" r="4.2" fill="#6a6a6a" stroke="#9a9a9a" stroke-width="0.9"/><circle cx="875.3" cy="449.14" r="2.2" fill="none" stroke="#bdbdbd" stroke-width="0.9"/><rect x="882.7" y="446.64" width="5" height="5" fill="#4a7be0" stroke="#222" stroke-width="0.5"/><rect x="749" y="456.71999999999997" width="13.5" height="13.6" fill="#535353"/><rect x="763.2" y="456.71999999999997" width="13.5" height="13.6" fill="#535353"/><rect x="777.3" y="456.71999999999997" width="90.5" height="13.6" fill="#535353"/><rect x="868.5" y="456.71999999999997" width="23.5" height="13.6" fill="#535353"/><rect x="777.2" y="456.71999999999997" width="2" height="13.6" fill="#4a7be0"/><path d="M752 463.71999999999997 Q756 459.21999999999997 760 463.71999999999997 Q756 467.21999999999997 752 463.71999999999997Z" fill="none" stroke="#d0d0d0" stroke-width="1"/><circle cx="756" cy="463.32" r="1.6" fill="#d0d0d0"/><rect x="808.3" y="458.21999999999997" width="11.3" height="11" fill="#ffffff"/><path d="M809.3 466.71999999999997 Q812.3 459.71999999999997 818.3 459.71999999999997 Q816.3 465.71999999999997 809.3 466.71999999999997Z" fill="#9a3a22"/><circle cx="875.3" cy="463.52" r="2.8" fill="#8a8a8a" stroke="#b0b0b0" stroke-width="0.8"/><rect x="749" y="471.1" width="13.5" height="13.6" fill="#535353"/><rect x="763.2" y="471.1" width="13.5" height="13.6" fill="#535353"/><rect x="777.3" y="471.1" width="90.5" height="13.6" fill="#535353"/><rect x="868.5" y="471.1" width="23.5" height="13.6" fill="#535353"/><rect x="777.2" y="471.1" width="2" height="13.6" fill="#4a7be0"/><path d="M752 478.1 Q756 473.6 760 478.1 Q756 481.6 752 478.1Z" fill="none" stroke="#d0d0d0" stroke-width="1"/><circle cx="756" cy="477.70000000000005" r="1.6" fill="#d0d0d0"/><rect x="808.3" y="472.6" width="11.3" height="11" fill="#ffffff"/><ellipse cx="813.9" cy="478.1" rx="4" ry="4.8" fill="#111"/><ellipse cx="813.9" cy="478.1" rx="3" ry="3.6" fill="#f0a070"/><circle cx="875.3" cy="477.90000000000003" r="2.8" fill="#8a8a8a" stroke="#b0b0b0" stroke-width="0.8"/></svg>
<div class="t " id="t124" style="left:809.50px;top:402.15px;font-size:8.8px;color:#dcdcdc;transform:scaleX(0.7600);">Layer 3</div>
<div class="t " id="t125" style="left:823.50px;top:416.53px;font-size:8.8px;color:#dcdcdc;transform:scaleX(0.7737);">&lt;Gro...</div>
<div class="t " id="t126" style="left:809.50px;top:430.91px;font-size:8.8px;color:#dcdcdc;transform:scaleX(0.7327);">Layer 1</div>
<div class="t " id="t127" style="left:823.50px;top:445.29px;font-size:8.8px;color:#dcdcdc;transform:scaleX(0.7770);">Envel...</div>
<div class="t " id="t128" style="left:823.50px;top:459.67px;font-size:8.8px;color:#dcdcdc;transform:scaleX(0.7577);">&lt;Path&gt;</div>
<div class="t " id="t129" style="left:823.50px;top:474.05px;font-size:8.8px;color:#dcdcdc;transform:scaleX(0.7577);">&lt;Path&gt;</div>
<div class="a" style="left:892px;top:399.2px;width:8px;height:86.3px;background:#3a3a3a;"></div>
<div class="a" style="left:893px;top:410px;width:7px;height:18px;background:#a0a0a0;"></div>
<svg style="left:893px;top:402px" width="7" height="5"><path d="M0.5 4.5 L3.5 0.5 L6.5 4.5Z" fill="#e8e8e8"/></svg>
<svg style="left:893px;top:478.5px" width="7" height="5"><path d="M0.5 0.5 L3.5 4.5 L6.5 0.5Z" fill="#e8e8e8"/></svg>
<div class="t " id="t130" style="left:748.40px;top:487.95px;font-size:8.8px;color:#dcdcdc;transform:scaleX(0.7111);">2 Layers</div>
<svg style="left:808px;top:487px" width="82" height="12" viewBox="0 0 82 12"><circle cx="6" cy="4.5" r="3.3" fill="none" stroke="#d8d8d8" stroke-width="1.1"/><path d="M3.8 7 L1.5 10" stroke="#d8d8d8" stroke-width="1.4"/><rect x="18.5" y="2" width="7" height="7" fill="none" stroke="#6a6a6a" stroke-width="1"/><rect x="20" y="5" width="4" height="3" fill="#6a6a6a"/><path d="M35 3 H44 M37 3 V8 M42 3 V8 M35 8 H44" stroke="#6a6a6a" stroke-width="0.9" fill="none"/><path d="M53 3 H60.3 V10 H53Z" fill="#d8d8d8"/><path d="M53 3 H56 V6 H53Z" fill="#4d4d4d"/><path d="M70.5 3.5 H77.5 M71.5 3.5 V10 H76.5 V3.5 M73 2 H75" stroke="#6a6a6a" stroke-width="1" fill="none"/></svg>
</body></html>
